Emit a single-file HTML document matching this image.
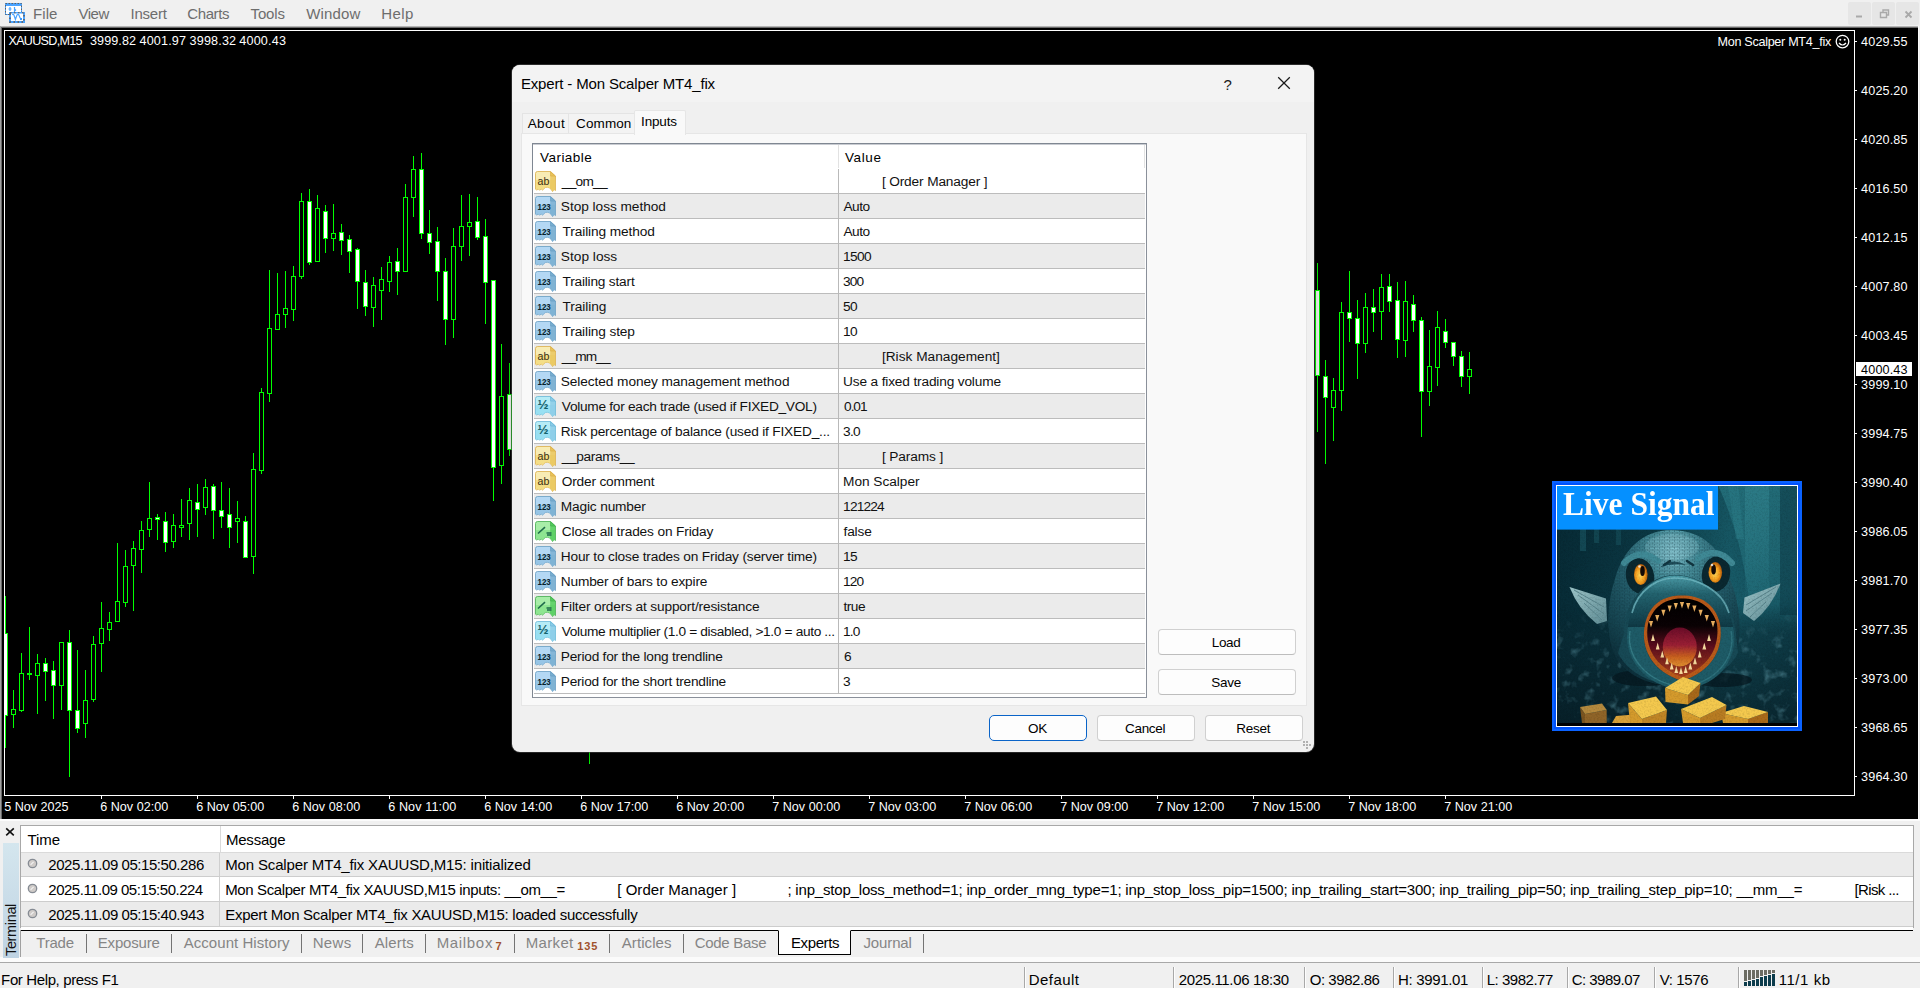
<!DOCTYPE html>
<html lang="en"><head><meta charset="utf-8"><title>MetaTrader 4 - Expert Inputs</title>
<style>
html,body{margin:0;padding:0}
body{width:1920px;height:988px;overflow:hidden;background:#f0f0f0;position:relative;font-family:'Liberation Sans',sans-serif}
.abs,.t,.ic,div{position:absolute}
.t{white-space:pre;margin:0;padding:0}
svg{display:block}
.btn{background:#fdfdfd;border:1px solid #d0d0d0;border-bottom-color:#bdbdbd;border-radius:4px;box-sizing:border-box}
</style></head><body>
<div style="left:0;top:0;width:1920px;height:26px;background:#f0f0f0"></div>
<svg class=abs style="left:0px;top:0px" width="28" height="26" viewBox="0 0 28 26">
<rect x="5" y="3" width="17" height="12" fill="#fff"/>
<rect x="5" y="3" width="17" height="3" fill="#4aa3ff"/>
<rect x="5.5" y="3.5" width="16" height="11" fill="none" stroke="#4aa3ff" stroke-width="1"/>
<rect x="5.5" y="3.5" width="16" height="11" fill="none" stroke="#5e6266" stroke-width="1" stroke-dasharray="1.5 1.5"/>
<path d="M10,7 v4 M8.5,9 h3 M14.5,7 v5 M14.5,9 l1.5,1.5" stroke="#4aa3ff" stroke-width="1.2" fill="none"/>
<rect x="9" y="12" width="16" height="11" fill="#4aa3ff"/>
<rect x="10" y="13" width="14" height="9" fill="none" stroke="#5e6266" stroke-width="2" stroke-dasharray="1.5 2.5" opacity=".85"/>
<rect x="11" y="13.5" width="12" height="7.5" fill="#fff"/>
<path d="M12.2,14.6 q1.4,-.6 2,1.2 l1.2,3.6 l1.6,-4.4 q.9,-1.2 1.9,0 l1.3,3.3" stroke="#4aa3ff" stroke-width="1.2" fill="none"/>
<rect x="20" y="18" width="2" height="2" fill="#3d98f8"/>
</svg>
<div style="left:1848px;top:2px;width:23px;height:23px;background:#e6e6e6;border-radius:2px"></div>
<div style="left:1872px;top:2px;width:23px;height:23px;background:#e6e6e6;border-radius:2px"></div>
<div style="left:1896px;top:2px;width:23px;height:23px;background:#e6e6e6;border-radius:2px"></div>
<svg class=abs style="left:1848px;top:2px" width="72" height="23" viewBox="0 0 72 23">
<rect x="8" y="13.5" width="6" height="2" fill="#a9a9a9"/>
<path d="M32.5,10.5 h6 v5 h-6 z M35,10 v-2 h5.5 v5 h-2" fill="none" stroke="#a9a9a9" stroke-width="1.4"/>
<path d="M57.5,9.5 l6,6 M63.5,9.5 l-6,6" stroke="#a9a9a9" stroke-width="1.8" fill="none"/>
</svg>
<div style="left:0;top:26px;width:1920px;height:793px;background:#000"></div>
<div style="left:0;top:26px;width:1920px;height:1px;background:#b4b4b4"></div>
<div style="left:0;top:27px;width:1920px;height:1px;background:#6a6a6a"></div>
<div style="left:0;top:26px;width:1px;height:793px;background:#a0a0a0"></div>
<div style="left:1px;top:27px;width:1px;height:792px;background:#696969"></div>
<div style="left:1918px;top:26px;width:1px;height:795px;background:#fbfbfb"></div><div style="left:1919px;top:26px;width:1px;height:795px;background:#f0f0f0"></div>
<svg class=abs style="left:0;top:0" width="1920" height="820" viewBox="0 0 1920 820" shape-rendering="crispEdges">
<rect x="1855" y="41" width="2" height="1" fill="#fff"/>
<rect x="1855" y="90" width="2" height="1" fill="#fff"/>
<rect x="1855" y="139" width="2" height="1" fill="#fff"/>
<rect x="1855" y="188" width="2" height="1" fill="#fff"/>
<rect x="1855" y="237" width="2" height="1" fill="#fff"/>
<rect x="1855" y="286" width="2" height="1" fill="#fff"/>
<rect x="1855" y="335" width="2" height="1" fill="#fff"/>
<rect x="1855" y="384" width="2" height="1" fill="#fff"/>
<rect x="1855" y="433" width="2" height="1" fill="#fff"/>
<rect x="1855" y="482" width="2" height="1" fill="#fff"/>
<rect x="1855" y="531" width="2" height="1" fill="#fff"/>
<rect x="1855" y="580" width="2" height="1" fill="#fff"/>
<rect x="1855" y="629" width="2" height="1" fill="#fff"/>
<rect x="1855" y="678" width="2" height="1" fill="#fff"/>
<rect x="1855" y="727" width="2" height="1" fill="#fff"/>
<rect x="1855" y="776" width="2" height="1" fill="#fff"/>
<rect x="101" y="796" width="1" height="3" fill="#fff"/>
<rect x="197" y="796" width="1" height="3" fill="#fff"/>
<rect x="293" y="796" width="1" height="3" fill="#fff"/>
<rect x="389" y="796" width="1" height="3" fill="#fff"/>
<rect x="485" y="796" width="1" height="3" fill="#fff"/>
<rect x="581" y="796" width="1" height="3" fill="#fff"/>
<rect x="677" y="796" width="1" height="3" fill="#fff"/>
<rect x="773" y="796" width="1" height="3" fill="#fff"/>
<rect x="869" y="796" width="1" height="3" fill="#fff"/>
<rect x="965" y="796" width="1" height="3" fill="#fff"/>
<rect x="1061" y="796" width="1" height="3" fill="#fff"/>
<rect x="1157" y="796" width="1" height="3" fill="#fff"/>
<rect x="1253" y="796" width="1" height="3" fill="#fff"/>
<rect x="1349" y="796" width="1" height="3" fill="#fff"/>
<rect x="1445" y="796" width="1" height="3" fill="#fff"/>
<rect x="5" y="596" width="1" height="152" fill="#00ff00"/>
<rect x="3.5" y="633.5" width="4" height="82" fill="#fff" stroke="#00ff00" stroke-width="1"/>
<rect x="13" y="690" width="1" height="38" fill="#00ff00"/>
<rect x="11.5" y="709.5" width="4" height="5" fill="#000" stroke="#00ff00" stroke-width="1"/>
<rect x="21" y="653" width="1" height="59" fill="#00ff00"/>
<rect x="19.5" y="673.5" width="4" height="37" fill="#000" stroke="#00ff00" stroke-width="1"/>
<rect x="29" y="627" width="1" height="53" fill="#00ff00"/>
<rect x="27" y="673" width="5" height="2" fill="#00ff00"/>
<rect x="37" y="654" width="1" height="60" fill="#00ff00"/>
<rect x="35.5" y="663.5" width="4" height="12" fill="#000" stroke="#00ff00" stroke-width="1"/>
<rect x="45" y="658" width="1" height="43" fill="#00ff00"/>
<rect x="43.5" y="663.5" width="4" height="8" fill="#fff" stroke="#00ff00" stroke-width="1"/>
<rect x="53" y="661" width="1" height="58" fill="#00ff00"/>
<rect x="51.5" y="670.5" width="4" height="15" fill="#fff" stroke="#00ff00" stroke-width="1"/>
<rect x="61" y="642" width="1" height="68" fill="#00ff00"/>
<rect x="59.5" y="642.5" width="4" height="43" fill="#000" stroke="#00ff00" stroke-width="1"/>
<rect x="69" y="630" width="1" height="147" fill="#00ff00"/>
<rect x="67.5" y="642.5" width="4" height="68" fill="#fff" stroke="#00ff00" stroke-width="1"/>
<rect x="77" y="650" width="1" height="83" fill="#00ff00"/>
<rect x="75.5" y="710.5" width="4" height="18" fill="#fff" stroke="#00ff00" stroke-width="1"/>
<rect x="85" y="670" width="1" height="68" fill="#00ff00"/>
<rect x="83.5" y="700.5" width="4" height="23" fill="#000" stroke="#00ff00" stroke-width="1"/>
<rect x="93" y="636" width="1" height="66" fill="#00ff00"/>
<rect x="91.5" y="644.5" width="4" height="55" fill="#000" stroke="#00ff00" stroke-width="1"/>
<rect x="101" y="602" width="1" height="70" fill="#00ff00"/>
<rect x="99.5" y="628.5" width="4" height="15" fill="#000" stroke="#00ff00" stroke-width="1"/>
<rect x="109" y="612" width="1" height="29" fill="#00ff00"/>
<rect x="107.5" y="622.5" width="4" height="7" fill="#000" stroke="#00ff00" stroke-width="1"/>
<rect x="117" y="543" width="1" height="78" fill="#00ff00"/>
<rect x="115.5" y="601.5" width="4" height="20" fill="#000" stroke="#00ff00" stroke-width="1"/>
<rect x="125" y="550" width="1" height="57" fill="#00ff00"/>
<rect x="123.5" y="566.5" width="4" height="36" fill="#000" stroke="#00ff00" stroke-width="1"/>
<rect x="133" y="541" width="1" height="70" fill="#00ff00"/>
<rect x="131.5" y="548.5" width="4" height="17" fill="#000" stroke="#00ff00" stroke-width="1"/>
<rect x="141" y="521" width="1" height="52" fill="#00ff00"/>
<rect x="139.5" y="530.5" width="4" height="19" fill="#000" stroke="#00ff00" stroke-width="1"/>
<rect x="149" y="482" width="1" height="55" fill="#00ff00"/>
<rect x="147.5" y="518.5" width="4" height="11" fill="#000" stroke="#00ff00" stroke-width="1"/>
<rect x="157" y="514" width="1" height="26" fill="#00ff00"/>
<rect x="155.5" y="517.5" width="4" height="2" fill="#fff" stroke="#00ff00" stroke-width="1"/>
<rect x="165" y="512" width="1" height="40" fill="#00ff00"/>
<rect x="163.5" y="521.5" width="4" height="21" fill="#fff" stroke="#00ff00" stroke-width="1"/>
<rect x="173" y="514" width="1" height="34" fill="#00ff00"/>
<rect x="171.5" y="525.5" width="4" height="16" fill="#000" stroke="#00ff00" stroke-width="1"/>
<rect x="181" y="499" width="1" height="38" fill="#00ff00"/>
<rect x="179.5" y="525.5" width="4" height="2" fill="#000" stroke="#00ff00" stroke-width="1"/>
<rect x="189" y="488" width="1" height="52" fill="#00ff00"/>
<rect x="187.5" y="500.5" width="4" height="23" fill="#000" stroke="#00ff00" stroke-width="1"/>
<rect x="197" y="484" width="1" height="53" fill="#00ff00"/>
<rect x="195.5" y="502.5" width="4" height="7" fill="#fff" stroke="#00ff00" stroke-width="1"/>
<rect x="205" y="479" width="1" height="36" fill="#00ff00"/>
<rect x="203.5" y="487.5" width="4" height="20" fill="#000" stroke="#00ff00" stroke-width="1"/>
<rect x="213" y="484" width="1" height="55" fill="#00ff00"/>
<rect x="211.5" y="486.5" width="4" height="24" fill="#fff" stroke="#00ff00" stroke-width="1"/>
<rect x="221" y="482" width="1" height="46" fill="#00ff00"/>
<rect x="219.5" y="510.5" width="4" height="6" fill="#fff" stroke="#00ff00" stroke-width="1"/>
<rect x="229" y="488" width="1" height="60" fill="#00ff00"/>
<rect x="227.5" y="514.5" width="4" height="13" fill="#fff" stroke="#00ff00" stroke-width="1"/>
<rect x="237" y="501" width="1" height="42" fill="#00ff00"/>
<rect x="235.5" y="518.5" width="4" height="3" fill="#000" stroke="#00ff00" stroke-width="1"/>
<rect x="245" y="516" width="1" height="41" fill="#00ff00"/>
<rect x="243.5" y="521.5" width="4" height="36" fill="#fff" stroke="#00ff00" stroke-width="1"/>
<rect x="253" y="453" width="1" height="121" fill="#00ff00"/>
<rect x="251.5" y="469.5" width="4" height="87" fill="#000" stroke="#00ff00" stroke-width="1"/>
<rect x="261" y="388" width="1" height="86" fill="#00ff00"/>
<rect x="259.5" y="392.5" width="4" height="78" fill="#000" stroke="#00ff00" stroke-width="1"/>
<rect x="269" y="270" width="1" height="132" fill="#00ff00"/>
<rect x="267.5" y="328.5" width="4" height="65" fill="#000" stroke="#00ff00" stroke-width="1"/>
<rect x="277" y="273" width="1" height="57" fill="#00ff00"/>
<rect x="275.5" y="314.5" width="4" height="15" fill="#000" stroke="#00ff00" stroke-width="1"/>
<rect x="285" y="271" width="1" height="57" fill="#00ff00"/>
<rect x="283.5" y="308.5" width="4" height="6" fill="#000" stroke="#00ff00" stroke-width="1"/>
<rect x="293" y="266" width="1" height="55" fill="#00ff00"/>
<rect x="291.5" y="276.5" width="4" height="33" fill="#000" stroke="#00ff00" stroke-width="1"/>
<rect x="301" y="193" width="1" height="86" fill="#00ff00"/>
<rect x="299.5" y="201.5" width="4" height="75" fill="#000" stroke="#00ff00" stroke-width="1"/>
<rect x="309" y="189" width="1" height="76" fill="#00ff00"/>
<rect x="307.5" y="201.5" width="4" height="61" fill="#fff" stroke="#00ff00" stroke-width="1"/>
<rect x="317" y="195" width="1" height="66" fill="#00ff00"/>
<rect x="315.5" y="208.5" width="4" height="53" fill="#000" stroke="#00ff00" stroke-width="1"/>
<rect x="325" y="205" width="1" height="48" fill="#00ff00"/>
<rect x="323.5" y="211.5" width="4" height="27" fill="#fff" stroke="#00ff00" stroke-width="1"/>
<rect x="333" y="204" width="1" height="47" fill="#00ff00"/>
<rect x="331.5" y="233.5" width="4" height="5" fill="#000" stroke="#00ff00" stroke-width="1"/>
<rect x="341" y="224" width="1" height="31" fill="#00ff00"/>
<rect x="339.5" y="232.5" width="4" height="8" fill="#fff" stroke="#00ff00" stroke-width="1"/>
<rect x="349" y="235" width="1" height="38" fill="#00ff00"/>
<rect x="347.5" y="239.5" width="4" height="12" fill="#fff" stroke="#00ff00" stroke-width="1"/>
<rect x="357" y="248" width="1" height="61" fill="#00ff00"/>
<rect x="355.5" y="249.5" width="4" height="32" fill="#fff" stroke="#00ff00" stroke-width="1"/>
<rect x="365" y="270" width="1" height="46" fill="#00ff00"/>
<rect x="363.5" y="282.5" width="4" height="24" fill="#fff" stroke="#00ff00" stroke-width="1"/>
<rect x="373" y="277" width="1" height="50" fill="#00ff00"/>
<rect x="371.5" y="285.5" width="4" height="22" fill="#000" stroke="#00ff00" stroke-width="1"/>
<rect x="381" y="267" width="1" height="53" fill="#00ff00"/>
<rect x="379.5" y="279.5" width="4" height="11" fill="#000" stroke="#00ff00" stroke-width="1"/>
<rect x="389" y="256" width="1" height="36" fill="#00ff00"/>
<rect x="387.5" y="262.5" width="4" height="19" fill="#000" stroke="#00ff00" stroke-width="1"/>
<rect x="397" y="248" width="1" height="47" fill="#00ff00"/>
<rect x="395.5" y="261.5" width="4" height="10" fill="#fff" stroke="#00ff00" stroke-width="1"/>
<rect x="405" y="184" width="1" height="87" fill="#00ff00"/>
<rect x="403.5" y="197.5" width="4" height="74" fill="#000" stroke="#00ff00" stroke-width="1"/>
<rect x="413" y="156" width="1" height="61" fill="#00ff00"/>
<rect x="411.5" y="169.5" width="4" height="28" fill="#000" stroke="#00ff00" stroke-width="1"/>
<rect x="421" y="153" width="1" height="86" fill="#00ff00"/>
<rect x="419.5" y="169.5" width="4" height="64" fill="#fff" stroke="#00ff00" stroke-width="1"/>
<rect x="429" y="210" width="1" height="44" fill="#00ff00"/>
<rect x="427.5" y="233.5" width="4" height="9" fill="#fff" stroke="#00ff00" stroke-width="1"/>
<rect x="437" y="227" width="1" height="74" fill="#00ff00"/>
<rect x="435.5" y="241.5" width="4" height="30" fill="#fff" stroke="#00ff00" stroke-width="1"/>
<rect x="445" y="258" width="1" height="87" fill="#00ff00"/>
<rect x="443.5" y="271.5" width="4" height="48" fill="#fff" stroke="#00ff00" stroke-width="1"/>
<rect x="453" y="228" width="1" height="110" fill="#00ff00"/>
<rect x="451.5" y="246.5" width="4" height="73" fill="#000" stroke="#00ff00" stroke-width="1"/>
<rect x="461" y="195" width="1" height="66" fill="#00ff00"/>
<rect x="459.5" y="226.5" width="4" height="20" fill="#000" stroke="#00ff00" stroke-width="1"/>
<rect x="469" y="194" width="1" height="62" fill="#00ff00"/>
<rect x="467.5" y="222.5" width="4" height="4" fill="#000" stroke="#00ff00" stroke-width="1"/>
<rect x="477" y="197" width="1" height="43" fill="#00ff00"/>
<rect x="475.5" y="221.5" width="4" height="16" fill="#fff" stroke="#00ff00" stroke-width="1"/>
<rect x="485" y="219" width="1" height="105" fill="#00ff00"/>
<rect x="483.5" y="236.5" width="4" height="46" fill="#fff" stroke="#00ff00" stroke-width="1"/>
<rect x="493" y="280" width="1" height="221" fill="#00ff00"/>
<rect x="491.5" y="280.5" width="4" height="187" fill="#fff" stroke="#00ff00" stroke-width="1"/>
<rect x="501" y="344" width="1" height="140" fill="#00ff00"/>
<rect x="499.5" y="396.5" width="4" height="69" fill="#000" stroke="#00ff00" stroke-width="1"/>
<rect x="509" y="363" width="1" height="93" fill="#00ff00"/>
<rect x="507.5" y="394.5" width="4" height="55" fill="#fff" stroke="#00ff00" stroke-width="1"/>
<rect x="589" y="700" width="1" height="64" fill="#00ff00"/>
<rect x="587.5" y="700.5" width="4" height="40" fill="#fff" stroke="#00ff00" stroke-width="1"/>
<rect x="1317" y="263" width="1" height="169" fill="#00ff00"/>
<rect x="1315.5" y="290.5" width="4" height="85" fill="#fff" stroke="#00ff00" stroke-width="1"/>
<rect x="1325" y="360" width="1" height="104" fill="#00ff00"/>
<rect x="1323.5" y="376.5" width="4" height="21" fill="#fff" stroke="#00ff00" stroke-width="1"/>
<rect x="1333" y="378" width="1" height="63" fill="#00ff00"/>
<rect x="1331.5" y="390.5" width="4" height="17" fill="#000" stroke="#00ff00" stroke-width="1"/>
<rect x="1341" y="302" width="1" height="109" fill="#00ff00"/>
<rect x="1339.5" y="312.5" width="4" height="78" fill="#000" stroke="#00ff00" stroke-width="1"/>
<rect x="1349" y="271" width="1" height="71" fill="#00ff00"/>
<rect x="1347.5" y="312.5" width="4" height="6" fill="#fff" stroke="#00ff00" stroke-width="1"/>
<rect x="1357" y="300" width="1" height="79" fill="#00ff00"/>
<rect x="1355.5" y="318.5" width="4" height="25" fill="#fff" stroke="#00ff00" stroke-width="1"/>
<rect x="1365" y="293" width="1" height="60" fill="#00ff00"/>
<rect x="1363.5" y="307.5" width="4" height="36" fill="#000" stroke="#00ff00" stroke-width="1"/>
<rect x="1373" y="289" width="1" height="43" fill="#00ff00"/>
<rect x="1371.5" y="307.5" width="4" height="5" fill="#fff" stroke="#00ff00" stroke-width="1"/>
<rect x="1381" y="274" width="1" height="66" fill="#00ff00"/>
<rect x="1379.5" y="287.5" width="4" height="24" fill="#000" stroke="#00ff00" stroke-width="1"/>
<rect x="1389" y="274" width="1" height="38" fill="#00ff00"/>
<rect x="1387.5" y="286.5" width="4" height="15" fill="#fff" stroke="#00ff00" stroke-width="1"/>
<rect x="1397" y="282" width="1" height="76" fill="#00ff00"/>
<rect x="1395.5" y="300.5" width="4" height="39" fill="#fff" stroke="#00ff00" stroke-width="1"/>
<rect x="1405" y="281" width="1" height="76" fill="#00ff00"/>
<rect x="1403.5" y="301.5" width="4" height="39" fill="#000" stroke="#00ff00" stroke-width="1"/>
<rect x="1413" y="295" width="1" height="37" fill="#00ff00"/>
<rect x="1411.5" y="304.5" width="4" height="16" fill="#fff" stroke="#00ff00" stroke-width="1"/>
<rect x="1421" y="317" width="1" height="120" fill="#00ff00"/>
<rect x="1419.5" y="320.5" width="4" height="71" fill="#fff" stroke="#00ff00" stroke-width="1"/>
<rect x="1429" y="330" width="1" height="76" fill="#00ff00"/>
<rect x="1427.5" y="366.5" width="4" height="25" fill="#000" stroke="#00ff00" stroke-width="1"/>
<rect x="1437" y="311" width="1" height="75" fill="#00ff00"/>
<rect x="1435.5" y="327.5" width="4" height="40" fill="#000" stroke="#00ff00" stroke-width="1"/>
<rect x="1445" y="319" width="1" height="29" fill="#00ff00"/>
<rect x="1443.5" y="331.5" width="4" height="11" fill="#fff" stroke="#00ff00" stroke-width="1"/>
<rect x="1453" y="342" width="1" height="24" fill="#00ff00"/>
<rect x="1451.5" y="342.5" width="4" height="14" fill="#fff" stroke="#00ff00" stroke-width="1"/>
<rect x="1461" y="351" width="1" height="36" fill="#00ff00"/>
<rect x="1459.5" y="356.5" width="4" height="20" fill="#fff" stroke="#00ff00" stroke-width="1"/>
<rect x="1469" y="352" width="1" height="42" fill="#00ff00"/>
<rect x="1467.5" y="369.5" width="4" height="7" fill="#000" stroke="#00ff00" stroke-width="1"/>
<rect x="2" y="31" width="2" height="764" fill="#000"/>
<rect x="4" y="30" width="1851" height="1" fill="#fff"/><rect x="4" y="30" width="1" height="766" fill="#fff"/><rect x="1854" y="30" width="1" height="766" fill="#fff"/><rect x="4" y="795" width="1851" height="1" fill="#fff"/>
<rect x="1856" y="362" width="56" height="14" fill="#fff"/>
</svg>
<svg class=abs style="left:1834px;top:33px" width="18" height="18" viewBox="0 0 18 18"><circle cx="8.5" cy="8.6" r="6.3" fill="none" stroke="#fff" stroke-width="1.3"/><circle cx="6.3" cy="6.8" r="1" fill="#fff"/><circle cx="10.7" cy="6.8" r="1" fill="#fff"/><path d="M5,10 q3.5,4 7,0" fill="none" stroke="#fff" stroke-width="1.2"/></svg>
<svg class=abs style="left:1552px;top:481px" width="250" height="250" viewBox="0 0 250 250">
<defs>
<linearGradient id="fbg" x1="0" y1="0" x2="1" y2="0"><stop offset="0" stop-color="#072b36"/><stop offset=".4" stop-color="#0c3a46"/><stop offset=".72" stop-color="#185c69"/><stop offset="1" stop-color="#114a57"/></linearGradient>
<linearGradient id="fdk" x1="0" y1="0" x2="0" y2="1"><stop offset="0" stop-color="#06222b" stop-opacity=".15"/><stop offset=".5" stop-color="#06222b" stop-opacity=".0"/><stop offset=".62" stop-color="#0a2a34" stop-opacity=".55"/><stop offset="1" stop-color="#071c24" stop-opacity=".8"/></linearGradient>
<radialGradient id="fhead" cx="50%" cy="14%" r="80%"><stop offset="0" stop-color="#86c8d4"/><stop offset=".22" stop-color="#4a929e"/><stop offset=".5" stop-color="#266270"/><stop offset=".8" stop-color="#154450"/><stop offset="1" stop-color="#0c2f3a"/></radialGradient>
<linearGradient id="flip" x1="0" y1="0" x2="0" y2="1"><stop offset="0" stop-color="#4c9ca8"/><stop offset=".35" stop-color="#23636f"/><stop offset="1" stop-color="#0f3945"/></linearGradient>
<linearGradient id="fmouth" x1="0" y1="0" x2="0" y2="1"><stop offset="0" stop-color="#000"/><stop offset=".35" stop-color="#0a0204"/><stop offset=".6" stop-color="#5a0c1c"/><stop offset="1" stop-color="#a8401c"/></linearGradient>
<linearGradient id="ftng" x1="0" y1="0" x2="0" y2="1"><stop offset="0" stop-color="#6a0c28"/><stop offset=".45" stop-color="#9a1f34"/><stop offset=".75" stop-color="#c8601e"/><stop offset="1" stop-color="#e09030"/></linearGradient>
<radialGradient id="feye" cx="45%" cy="55%" r="60%"><stop offset="0" stop-color="#ffd85a"/><stop offset=".6" stop-color="#f39a1a"/><stop offset="1" stop-color="#9a4508"/></radialGradient>
<linearGradient id="ffin" x1="0" y1="0" x2="1" y2="1"><stop offset="0" stop-color="#9cc4c8"/><stop offset="1" stop-color="#5f8c94"/></linearGradient>
<filter id="fnoise" x="0" y="0" width="100%" height="100%"><feTurbulence type="fractalNoise" baseFrequency=".09" numOctaves="3" seed="7"/><feColorMatrix values="0 0 0 0 .09  0 0 0 0 .26  0 0 0 0 .32  0 0 0 -2.4 1.1"/></filter>
<filter id="fgrain" x="0" y="0" width="100%" height="100%"><feTurbulence type="fractalNoise" baseFrequency=".55" numOctaves="2" seed="3"/><feColorMatrix values="0 0 0 0 0  0 0 0 0 0  0 0 0 0 0  0 0 0 -1.3 .75"/></filter>
<linearGradient id="ftr" x1="0" y1="0" x2="0" y2="1"><stop offset="0" stop-color="#2a7f8b" stop-opacity=".85"/><stop offset=".7" stop-color="#226f7b" stop-opacity=".6"/><stop offset="1" stop-color="#1a5a66" stop-opacity="0"/></linearGradient>
<linearGradient id="ftr2" x1="0" y1="0" x2="0" y2="1"><stop offset="0" stop-color="#3d9aa5" stop-opacity=".5"/><stop offset="1" stop-color="#3d9aa5" stop-opacity="0"/></linearGradient>
<linearGradient id="fmg" x1="0" y1="0" x2="0" y2="1"><stop offset="0" stop-color="#fff" stop-opacity="0"/><stop offset=".3" stop-color="#fff" stop-opacity="1"/></linearGradient>
<mask id="fmask" maskUnits="userSpaceOnUse" x="0" y="120" width="250" height="130"><rect x="0" y="128" width="250" height="120" fill="url(#fmg)"/></mask>
<pattern id="fsc" width="5" height="3.4" patternUnits="userSpaceOnUse"><path d="M0,0 H5 M0,0 V1.7 M2.5,1.7 V3.4 M0,1.7 H5" stroke="#0e3440" stroke-width=".55" fill="none" opacity=".55"/></pattern>
<clipPath id="fclip"><rect x="5" y="5" width="240" height="237"/></clipPath>
</defs>
<rect x="0" y="0" width="250" height="250" fill="#0a62ff"/><rect x="2" y="2" width="246" height="246" fill="#0052fb"/>
<rect x="4" y="4" width="242" height="242" fill="#fff"/>
<rect x="5" y="5" width="240" height="240" fill="#000"/>
<g clip-path="url(#fclip)">
<rect x="4.5" y="4.5" width="241" height="238" fill="url(#fbg)"/>
<path d="M166,4 h80 v150 h-46 Q196,70 166,4Z" fill="url(#ftr)"/>
<rect x="193" y="4" width="24" height="125" fill="url(#ftr2)"/>
<path d="M176,4 h10 l6,54 h-8Z" fill="#37939e" opacity=".35"/>
<rect x="228" y="4" width="18" height="130" fill="#0d3b47" opacity=".55"/>
<rect x="28" y="40" width="6" height="30" fill="#2b7f8c" opacity=".35"/><rect x="42" y="40" width="5" height="22" fill="#2b7f8c" opacity=".3"/><rect x="64" y="46" width="5" height="18" fill="#2b7f8c" opacity=".25"/>
<rect x="4.5" y="4.5" width="241" height="238" fill="url(#fdk)"/>
<g mask="url(#fmask)"><rect x="4.5" y="124" width="241" height="118" filter="url(#fnoise)" opacity=".7"/></g>
<ellipse cx="92" cy="197" rx="32" ry="8" fill="#051820" opacity=".75"/><ellipse cx="170" cy="199" rx="30" ry="7" fill="#051820" opacity=".75"/>
<path d="M17.5,106 L54,117.5 L55,140 L45,143 Q26,128 17.5,106Z" fill="url(#ffin)"/>
<path d="M228.5,102.5 L192.5,116.5 L191,132 L202,140 Q220,126 228.5,102.5Z" fill="url(#ffin)"/>
<path d="M22,109 L52,126 M26,114 L52,133 M32,122 L50,139" stroke="#5a868e" stroke-width="1" fill="none"/>
<path d="M224,106 L194,124 M220,112 L194,130 M214,121 L198,136" stroke="#5a868e" stroke-width="1" fill="none"/>
<path d="M119,49 C150,49 170,68 178,98 C188,122 190,150 185,170 C178,194 152,205 125,205 C98,205 70,194 61,170 C54,150 55,122 63,98 C71,68 92,49 119,49Z" fill="url(#fhead)"/>
<ellipse cx="120" cy="66" rx="27" ry="13" fill="#9ad6e0" opacity=".3"/>
<path d="M119,49 C150,49 170,68 178,98 C188,122 190,150 185,170 C178,194 152,205 125,205 C98,205 70,194 61,170 C54,150 55,122 63,98 C71,68 92,49 119,49Z" fill="url(#fsc)"/>
<ellipse cx="88" cy="95" rx="14" ry="18" transform="rotate(-12 88 95)" fill="#0a2830"/>
<ellipse cx="164" cy="93" rx="14" ry="18" transform="rotate(12 164 93)" fill="#0a2830"/>
<path d="M72,82 Q88,66 106,80" stroke="#3f8995" stroke-width="6" fill="none" stroke-linecap="round"/>
<path d="M146,78 Q164,64 180,82" stroke="#3f8995" stroke-width="6" fill="none" stroke-linecap="round"/>
<ellipse cx="88.8" cy="93.5" rx="6.8" ry="10.6" fill="url(#feye)"/><ellipse cx="163.3" cy="91.3" rx="6.8" ry="10.4" fill="url(#feye)"/>
<ellipse cx="90.5" cy="90" rx="2.3" ry="5" fill="#140a06"/><ellipse cx="161.6" cy="88.5" rx="2.3" ry="5" fill="#140a06"/>
<circle cx="87.5" cy="85.5" r="1.3" fill="#fff" opacity=".8"/><circle cx="160" cy="84" r="1.3" fill="#fff" opacity=".8"/>
<path d="M112,84 l6,-4 M135,80 l6,4" stroke="#123640" stroke-width="2.5" stroke-linecap="round"/>
<path d="M72,152 C72,118 98,94 123,94 C150,94 182,118 184,152 L186,172 C176,192 150,204 126,204 C100,204 76,192 66,172Z" fill="#174955"/>
<path d="M76,146 C78,112 104,94.5 123,94.5 C146,94.5 176,112 181,146 L168,146 C164,124 148,114.5 130,114.5 C110,114.5 98,124 93,146Z" fill="url(#flip)"/>
<path d="M80,132 C86,108 106,97 123,97 C144,97 170,108 177,132" stroke="#79c0ca" stroke-width="1.6" fill="none" opacity=".7"/>
<path d="M76,146 C70,176 92,205 130,209 C168,205 188,176 181,146 L168,146 C172,168 160,191 130,200 C100,191 88,168 93,146Z" fill="#1e5b67"/>
<path d="M78,150 C74,176 94,201 130,206" stroke="#3d8792" stroke-width="1.4" fill="none" opacity=".7"/>
<path d="M179,150 C184,176 166,201 130,206" stroke="#3d8792" stroke-width="1.4" fill="none" opacity=".5"/>
<path d="M108,86 Q121,76 134,84 Q121,82 108,86Z" fill="#0f3a46" opacity=".8"/>
<path d="M93,143 C98,122 112,114.5 130,114.5 C148,114.5 163,122 168,143 C172,168 160,190 130,200 C100,190 88,168 93,143Z" fill="#b85a1a"/>
<path d="M96,143 C101,125 114,117.5 130,117.5 C146,117.5 160,125 165,143 C168,166 157,186 130,196 C103,186 92,166 96,143Z" fill="url(#fmouth)"/>
<ellipse cx="127.8" cy="166" rx="17" ry="19.5" fill="url(#ftng)"/>
<path d="M96.9,140.0 L101.1,140.0 L99.0,146.5Z" fill="#e9b060"/><path d="M103.10000000000001,134.1 L107.3,134.1 L105.2,140.6Z" fill="#e9b060"/><path d="M109.30000000000001,128.8 L113.5,128.8 L111.4,135.3Z" fill="#e9b060"/><path d="M115.5,124.6 L119.69999999999999,124.6 L117.6,131.1Z" fill="#e9b060"/><path d="M121.7,121.9 L125.89999999999999,121.9 L123.8,128.4Z" fill="#e9b060"/><path d="M127.9,121.0 L132.1,121.0 L130.0,127.5Z" fill="#e9b060"/><path d="M134.1,121.9 L138.29999999999998,121.9 L136.2,128.4Z" fill="#e9b060"/><path d="M140.3,124.6 L144.5,124.6 L142.4,131.1Z" fill="#e9b060"/><path d="M146.5,128.8 L150.7,128.8 L148.6,135.3Z" fill="#e9b060"/><path d="M152.70000000000002,134.1 L156.9,134.1 L154.8,140.6Z" fill="#e9b060"/><path d="M158.9,140.0 L163.1,140.0 L161.0,146.5Z" fill="#e9b060"/><path d="M99.1,160.0 L102.9,160.0 L101.0,153.0Z" fill="#f7dca0"/><path d="M103.8,168.5 L107.60000000000001,168.5 L105.7,161.5Z" fill="#f7dca0"/><path d="M108.39999999999999,176.5 L112.2,176.5 L110.3,169.5Z" fill="#f7dca0"/><path d="M113.1,183.3 L116.9,183.3 L115.0,176.3Z" fill="#f7dca0"/><path d="M117.8,188.6 L121.60000000000001,188.6 L119.7,181.6Z" fill="#f7dca0"/><path d="M122.39999999999999,191.9 L126.2,191.9 L124.3,184.9Z" fill="#f7dca0"/><path d="M127.1,193.0 L130.9,193.0 L129.0,186.0Z" fill="#f7dca0"/><path d="M131.79999999999998,191.9 L135.6,191.9 L133.7,184.9Z" fill="#f7dca0"/><path d="M136.4,188.6 L140.20000000000002,188.6 L138.3,181.6Z" fill="#f7dca0"/><path d="M141.1,183.3 L144.9,183.3 L143.0,176.3Z" fill="#f7dca0"/><path d="M145.79999999999998,176.5 L149.6,176.5 L147.7,169.5Z" fill="#f7dca0"/><path d="M150.4,168.5 L154.20000000000002,168.5 L152.3,161.5Z" fill="#f7dca0"/><path d="M155.1,160.0 L158.9,160.0 L157.0,153.0Z" fill="#f7dca0"/><path d="M28,226 L33,233 L33,242 L30,242Z" fill="#7a5420"/><path d="M33,233 L54.7,229 L54.7,242 L33,242Z" fill="#8f6428"/><path d="M28,226 L50,222.5 L54.7,229 L33,233Z" fill="#b58a3e"/><path d="M60,242 L64,235 L82,233.5 L86,242Z" fill="#d9a23a"/><path d="M169,232 L196,238 L196,242 L171,242Z" fill="#d49a2c"/><path d="M196,238 L216,231 L216,242 L196,242Z" fill="#a8691a"/><path d="M169,232 L192,225 L216,231 L196,238Z" fill="#f4c94e"/><path d="M76,222 L90,238 L90,242 L78,242Z" fill="#d49a2c"/><path d="M90,238 L115,229 L114,242 L90,242Z" fill="#bf8526"/><path d="M76,222 L104,215.5 L115,229 L90,238Z" fill="#f4c94e"/><path d="M129,228 L148,237 L148,242 L131,242Z" fill="#d49a2c"/><path d="M148,237 L174.5,224 L173,238 L160,242 L148,242Z" fill="#b87c22"/><path d="M129,228 L160,216 L174.5,224 L148,237Z" fill="#f4c94e"/><path d="M113,207 L136,214 L136,223.5 L113.5,221Z" fill="#d49a2c"/><path d="M136,214 L148.5,202 L147,215 L136,223.5Z" fill="#a8691a"/><path d="M113,207 L131,196 L148.5,202 L136,214Z" fill="#f4c94e"/><rect x="4.5" y="4.5" width="241" height="238" filter="url(#fgrain)" opacity=".18"/></g><rect x="5" y="5" width="161" height="43.6" fill="#0590ff"/></svg>
<div style="left:511px;top:64px;width:804px;height:689px;border-radius:9px;background:rgba(90,90,90,.55)"></div>
<div style="left:512px;top:65px;width:802px;height:687px;border-radius:8px;background:#f0f0f0;overflow:hidden;box-shadow:0 3px 16px rgba(0,0,0,.35)"><div style="left:0;top:0;width:802px;height:37px;background:#f3f3f3"></div></div>
<svg class=abs style="left:1270px;top:70px" width="28" height="26" viewBox="0 0 28 26"><path d="M8.2,7.2 l11.6,11.6 M19.8,7.2 l-11.6,11.6" stroke="#1a1a1a" stroke-width="1.25" fill="none"/></svg>
<div style="left:522px;top:113px;width:47px;height:21px;background:#f3f3f3;border:1px solid #e4e4e4;box-sizing:border-box;border-bottom:none"></div>
<div style="left:569px;top:113px;width:66px;height:21px;background:#f3f3f3;border:1px solid #e4e4e4;box-sizing:border-box;border-bottom:none;border-left:none"></div>
<div style="left:521px;top:133px;width:786px;height:573px;background:#f9f9f9;border:1px solid #e6e6e6;box-sizing:border-box"></div>
<div style="left:634px;top:110px;width:52px;height:25px;background:#f9f9f9;border:1px solid #e6e6e6;border-bottom:none;box-sizing:border-box;border-radius:2px 2px 0 0"></div>
<div style="left:532px;top:143px;width:615px;height:555px;background:#fff;border:1px solid #7f8792;box-sizing:border-box;border-right-color:#8a909a;border-bottom-color:#8a909a"></div>
<div style="left:533px;top:144px;width:613px;height:1px;background:#c9ccd2"></div>
<div style="left:838px;top:145px;width:1px;height:23px;background:#e2e2e2"></div><div style="left:1144px;top:145px;width:1px;height:23px;background:#e2e2e2"></div>
<div style="left:534px;top:169px;width:611px;height:24px;background:#fff"></div>
<div style="left:534px;top:193px;width:611px;height:1px;background:#bcbcbc"></div>
<svg class=ic style="left:535px;top:171px" width="21" height="21" viewBox="0 0 21 21"><path d="M0.5,2.5 Q0.5,0.5 2.5,0.5 H15.5 L20.5,5 V19.6 L19,18.4 L17.6,20.5 L16.2,18.4 L14.6,17 L12.5,16.2 L10.5,16.4 L9,17.4 L7.6,19.2 L6.1,17.8 L4.6,19.3 L3.1,17.8 L1.7,19.2 L0.5,18 Z" fill="#f8ecb4" stroke="#d9a93f" stroke-width="1" stroke-opacity=".75"/><path d="M1,9 H20 V19 L19,18.4 L17.6,20.2 L16.2,18.4 L14.6,17 L12.5,16.2 L10.5,16.4 L9,17.4 L7.6,19 L6.1,17.8 L4.6,19 L3.1,17.8 L1.7,19 L1,18 Z" fill="#f3d978" opacity=".75"/><path d="M15.2,5 H20 V19.3 L19,18.4 L17.6,20.2 L16.2,18.4 L15,17.3 Z" fill="#e9c45a" opacity=".8"/><path d="M15.5,0.8 V5 H20.2 Z" fill="#e9c45a" stroke="#d9a93f" stroke-width=".6"/><text x="2.6" y="14.1" font-family="'Liberation Sans',sans-serif" font-size="10.4" fill="#3a2e14" textLength="11.8" lengthAdjust="spacingAndGlyphs">ab</text></svg>
<div style="left:534px;top:194px;width:611px;height:24px;background:#ebebeb"></div>
<div style="left:534px;top:218px;width:611px;height:1px;background:#bcbcbc"></div>
<svg class=ic style="left:535px;top:196px" width="21" height="21" viewBox="0 0 21 21"><path d="M0.5,2.5 Q0.5,0.5 2.5,0.5 H15.5 L20.5,5 V19.6 L19,18.4 L17.6,20.5 L16.2,18.4 L14.6,17 L12.5,16.2 L10.5,16.4 L9,17.4 L7.6,19.2 L6.1,17.8 L4.6,19.3 L3.1,17.8 L1.7,19.2 L0.5,18 Z" fill="#b4d8f4" stroke="#5f98bf" stroke-width="1" stroke-opacity=".75"/><path d="M1,9 H20 V19 L19,18.4 L17.6,20.2 L16.2,18.4 L14.6,17 L12.5,16.2 L10.5,16.4 L9,17.4 L7.6,19 L6.1,17.8 L4.6,19 L3.1,17.8 L1.7,19 L1,18 Z" fill="#8ebfe2" opacity=".75"/><path d="M15.2,5 H20 V19.3 L19,18.4 L17.6,20.2 L16.2,18.4 L15,17.3 Z" fill="#79aed0" opacity=".8"/><path d="M15.5,0.8 V5 H20.2 Z" fill="#79aed0" stroke="#5f98bf" stroke-width=".6"/><text x="2.5" y="14.4" font-family="'Liberation Sans',sans-serif" font-size="9.2" font-weight="700" fill="#06202a" textLength="13.2" lengthAdjust="spacingAndGlyphs">123</text></svg>
<div style="left:534px;top:219px;width:611px;height:24px;background:#fff"></div>
<div style="left:534px;top:243px;width:611px;height:1px;background:#bcbcbc"></div>
<svg class=ic style="left:535px;top:221px" width="21" height="21" viewBox="0 0 21 21"><path d="M0.5,2.5 Q0.5,0.5 2.5,0.5 H15.5 L20.5,5 V19.6 L19,18.4 L17.6,20.5 L16.2,18.4 L14.6,17 L12.5,16.2 L10.5,16.4 L9,17.4 L7.6,19.2 L6.1,17.8 L4.6,19.3 L3.1,17.8 L1.7,19.2 L0.5,18 Z" fill="#b4d8f4" stroke="#5f98bf" stroke-width="1" stroke-opacity=".75"/><path d="M1,9 H20 V19 L19,18.4 L17.6,20.2 L16.2,18.4 L14.6,17 L12.5,16.2 L10.5,16.4 L9,17.4 L7.6,19 L6.1,17.8 L4.6,19 L3.1,17.8 L1.7,19 L1,18 Z" fill="#8ebfe2" opacity=".75"/><path d="M15.2,5 H20 V19.3 L19,18.4 L17.6,20.2 L16.2,18.4 L15,17.3 Z" fill="#79aed0" opacity=".8"/><path d="M15.5,0.8 V5 H20.2 Z" fill="#79aed0" stroke="#5f98bf" stroke-width=".6"/><text x="2.5" y="14.4" font-family="'Liberation Sans',sans-serif" font-size="9.2" font-weight="700" fill="#06202a" textLength="13.2" lengthAdjust="spacingAndGlyphs">123</text></svg>
<div style="left:534px;top:244px;width:611px;height:24px;background:#ebebeb"></div>
<div style="left:534px;top:268px;width:611px;height:1px;background:#bcbcbc"></div>
<svg class=ic style="left:535px;top:246px" width="21" height="21" viewBox="0 0 21 21"><path d="M0.5,2.5 Q0.5,0.5 2.5,0.5 H15.5 L20.5,5 V19.6 L19,18.4 L17.6,20.5 L16.2,18.4 L14.6,17 L12.5,16.2 L10.5,16.4 L9,17.4 L7.6,19.2 L6.1,17.8 L4.6,19.3 L3.1,17.8 L1.7,19.2 L0.5,18 Z" fill="#b4d8f4" stroke="#5f98bf" stroke-width="1" stroke-opacity=".75"/><path d="M1,9 H20 V19 L19,18.4 L17.6,20.2 L16.2,18.4 L14.6,17 L12.5,16.2 L10.5,16.4 L9,17.4 L7.6,19 L6.1,17.8 L4.6,19 L3.1,17.8 L1.7,19 L1,18 Z" fill="#8ebfe2" opacity=".75"/><path d="M15.2,5 H20 V19.3 L19,18.4 L17.6,20.2 L16.2,18.4 L15,17.3 Z" fill="#79aed0" opacity=".8"/><path d="M15.5,0.8 V5 H20.2 Z" fill="#79aed0" stroke="#5f98bf" stroke-width=".6"/><text x="2.5" y="14.4" font-family="'Liberation Sans',sans-serif" font-size="9.2" font-weight="700" fill="#06202a" textLength="13.2" lengthAdjust="spacingAndGlyphs">123</text></svg>
<div style="left:534px;top:269px;width:611px;height:24px;background:#fff"></div>
<div style="left:534px;top:293px;width:611px;height:1px;background:#bcbcbc"></div>
<svg class=ic style="left:535px;top:271px" width="21" height="21" viewBox="0 0 21 21"><path d="M0.5,2.5 Q0.5,0.5 2.5,0.5 H15.5 L20.5,5 V19.6 L19,18.4 L17.6,20.5 L16.2,18.4 L14.6,17 L12.5,16.2 L10.5,16.4 L9,17.4 L7.6,19.2 L6.1,17.8 L4.6,19.3 L3.1,17.8 L1.7,19.2 L0.5,18 Z" fill="#b4d8f4" stroke="#5f98bf" stroke-width="1" stroke-opacity=".75"/><path d="M1,9 H20 V19 L19,18.4 L17.6,20.2 L16.2,18.4 L14.6,17 L12.5,16.2 L10.5,16.4 L9,17.4 L7.6,19 L6.1,17.8 L4.6,19 L3.1,17.8 L1.7,19 L1,18 Z" fill="#8ebfe2" opacity=".75"/><path d="M15.2,5 H20 V19.3 L19,18.4 L17.6,20.2 L16.2,18.4 L15,17.3 Z" fill="#79aed0" opacity=".8"/><path d="M15.5,0.8 V5 H20.2 Z" fill="#79aed0" stroke="#5f98bf" stroke-width=".6"/><text x="2.5" y="14.4" font-family="'Liberation Sans',sans-serif" font-size="9.2" font-weight="700" fill="#06202a" textLength="13.2" lengthAdjust="spacingAndGlyphs">123</text></svg>
<div style="left:534px;top:294px;width:611px;height:24px;background:#ebebeb"></div>
<div style="left:534px;top:318px;width:611px;height:1px;background:#bcbcbc"></div>
<svg class=ic style="left:535px;top:296px" width="21" height="21" viewBox="0 0 21 21"><path d="M0.5,2.5 Q0.5,0.5 2.5,0.5 H15.5 L20.5,5 V19.6 L19,18.4 L17.6,20.5 L16.2,18.4 L14.6,17 L12.5,16.2 L10.5,16.4 L9,17.4 L7.6,19.2 L6.1,17.8 L4.6,19.3 L3.1,17.8 L1.7,19.2 L0.5,18 Z" fill="#b4d8f4" stroke="#5f98bf" stroke-width="1" stroke-opacity=".75"/><path d="M1,9 H20 V19 L19,18.4 L17.6,20.2 L16.2,18.4 L14.6,17 L12.5,16.2 L10.5,16.4 L9,17.4 L7.6,19 L6.1,17.8 L4.6,19 L3.1,17.8 L1.7,19 L1,18 Z" fill="#8ebfe2" opacity=".75"/><path d="M15.2,5 H20 V19.3 L19,18.4 L17.6,20.2 L16.2,18.4 L15,17.3 Z" fill="#79aed0" opacity=".8"/><path d="M15.5,0.8 V5 H20.2 Z" fill="#79aed0" stroke="#5f98bf" stroke-width=".6"/><text x="2.5" y="14.4" font-family="'Liberation Sans',sans-serif" font-size="9.2" font-weight="700" fill="#06202a" textLength="13.2" lengthAdjust="spacingAndGlyphs">123</text></svg>
<div style="left:534px;top:319px;width:611px;height:24px;background:#fff"></div>
<div style="left:534px;top:343px;width:611px;height:1px;background:#bcbcbc"></div>
<svg class=ic style="left:535px;top:321px" width="21" height="21" viewBox="0 0 21 21"><path d="M0.5,2.5 Q0.5,0.5 2.5,0.5 H15.5 L20.5,5 V19.6 L19,18.4 L17.6,20.5 L16.2,18.4 L14.6,17 L12.5,16.2 L10.5,16.4 L9,17.4 L7.6,19.2 L6.1,17.8 L4.6,19.3 L3.1,17.8 L1.7,19.2 L0.5,18 Z" fill="#b4d8f4" stroke="#5f98bf" stroke-width="1" stroke-opacity=".75"/><path d="M1,9 H20 V19 L19,18.4 L17.6,20.2 L16.2,18.4 L14.6,17 L12.5,16.2 L10.5,16.4 L9,17.4 L7.6,19 L6.1,17.8 L4.6,19 L3.1,17.8 L1.7,19 L1,18 Z" fill="#8ebfe2" opacity=".75"/><path d="M15.2,5 H20 V19.3 L19,18.4 L17.6,20.2 L16.2,18.4 L15,17.3 Z" fill="#79aed0" opacity=".8"/><path d="M15.5,0.8 V5 H20.2 Z" fill="#79aed0" stroke="#5f98bf" stroke-width=".6"/><text x="2.5" y="14.4" font-family="'Liberation Sans',sans-serif" font-size="9.2" font-weight="700" fill="#06202a" textLength="13.2" lengthAdjust="spacingAndGlyphs">123</text></svg>
<div style="left:534px;top:344px;width:611px;height:24px;background:#ebebeb"></div>
<div style="left:534px;top:368px;width:611px;height:1px;background:#bcbcbc"></div>
<svg class=ic style="left:535px;top:346px" width="21" height="21" viewBox="0 0 21 21"><path d="M0.5,2.5 Q0.5,0.5 2.5,0.5 H15.5 L20.5,5 V19.6 L19,18.4 L17.6,20.5 L16.2,18.4 L14.6,17 L12.5,16.2 L10.5,16.4 L9,17.4 L7.6,19.2 L6.1,17.8 L4.6,19.3 L3.1,17.8 L1.7,19.2 L0.5,18 Z" fill="#f8ecb4" stroke="#d9a93f" stroke-width="1" stroke-opacity=".75"/><path d="M1,9 H20 V19 L19,18.4 L17.6,20.2 L16.2,18.4 L14.6,17 L12.5,16.2 L10.5,16.4 L9,17.4 L7.6,19 L6.1,17.8 L4.6,19 L3.1,17.8 L1.7,19 L1,18 Z" fill="#f3d978" opacity=".75"/><path d="M15.2,5 H20 V19.3 L19,18.4 L17.6,20.2 L16.2,18.4 L15,17.3 Z" fill="#e9c45a" opacity=".8"/><path d="M15.5,0.8 V5 H20.2 Z" fill="#e9c45a" stroke="#d9a93f" stroke-width=".6"/><text x="2.6" y="14.1" font-family="'Liberation Sans',sans-serif" font-size="10.4" fill="#3a2e14" textLength="11.8" lengthAdjust="spacingAndGlyphs">ab</text></svg>
<div style="left:534px;top:369px;width:611px;height:24px;background:#fff"></div>
<div style="left:534px;top:393px;width:611px;height:1px;background:#bcbcbc"></div>
<svg class=ic style="left:535px;top:371px" width="21" height="21" viewBox="0 0 21 21"><path d="M0.5,2.5 Q0.5,0.5 2.5,0.5 H15.5 L20.5,5 V19.6 L19,18.4 L17.6,20.5 L16.2,18.4 L14.6,17 L12.5,16.2 L10.5,16.4 L9,17.4 L7.6,19.2 L6.1,17.8 L4.6,19.3 L3.1,17.8 L1.7,19.2 L0.5,18 Z" fill="#b4d8f4" stroke="#5f98bf" stroke-width="1" stroke-opacity=".75"/><path d="M1,9 H20 V19 L19,18.4 L17.6,20.2 L16.2,18.4 L14.6,17 L12.5,16.2 L10.5,16.4 L9,17.4 L7.6,19 L6.1,17.8 L4.6,19 L3.1,17.8 L1.7,19 L1,18 Z" fill="#8ebfe2" opacity=".75"/><path d="M15.2,5 H20 V19.3 L19,18.4 L17.6,20.2 L16.2,18.4 L15,17.3 Z" fill="#79aed0" opacity=".8"/><path d="M15.5,0.8 V5 H20.2 Z" fill="#79aed0" stroke="#5f98bf" stroke-width=".6"/><text x="2.5" y="14.4" font-family="'Liberation Sans',sans-serif" font-size="9.2" font-weight="700" fill="#06202a" textLength="13.2" lengthAdjust="spacingAndGlyphs">123</text></svg>
<div style="left:534px;top:394px;width:611px;height:24px;background:#ebebeb"></div>
<div style="left:534px;top:418px;width:611px;height:1px;background:#bcbcbc"></div>
<svg class=ic style="left:535px;top:396px" width="21" height="21" viewBox="0 0 21 21"><path d="M0.5,2.5 Q0.5,0.5 2.5,0.5 H15.5 L20.5,5 V19.6 L19,18.4 L17.6,20.5 L16.2,18.4 L14.6,17 L12.5,16.2 L10.5,16.4 L9,17.4 L7.6,19.2 L6.1,17.8 L4.6,19.3 L3.1,17.8 L1.7,19.2 L0.5,18 Z" fill="#b6ecf6" stroke="#62b4d6" stroke-width="1" stroke-opacity=".75"/><path d="M1,9 H20 V19 L19,18.4 L17.6,20.2 L16.2,18.4 L14.6,17 L12.5,16.2 L10.5,16.4 L9,17.4 L7.6,19 L6.1,17.8 L4.6,19 L3.1,17.8 L1.7,19 L1,18 Z" fill="#8fdcf0" opacity=".75"/><path d="M15.2,5 H20 V19.3 L19,18.4 L17.6,20.2 L16.2,18.4 L15,17.3 Z" fill="#8ccbe6" opacity=".8"/><path d="M15.5,0.8 V5 H20.2 Z" fill="#8ccbe6" stroke="#62b4d6" stroke-width=".6"/><text x="2.4" y="13.1" font-family="'Liberation Sans',sans-serif" font-size="12.5" font-weight="700" fill="#14626c" textLength="11" lengthAdjust="spacingAndGlyphs">½</text></svg>
<div style="left:534px;top:419px;width:611px;height:24px;background:#fff"></div>
<div style="left:534px;top:443px;width:611px;height:1px;background:#bcbcbc"></div>
<svg class=ic style="left:535px;top:421px" width="21" height="21" viewBox="0 0 21 21"><path d="M0.5,2.5 Q0.5,0.5 2.5,0.5 H15.5 L20.5,5 V19.6 L19,18.4 L17.6,20.5 L16.2,18.4 L14.6,17 L12.5,16.2 L10.5,16.4 L9,17.4 L7.6,19.2 L6.1,17.8 L4.6,19.3 L3.1,17.8 L1.7,19.2 L0.5,18 Z" fill="#b6ecf6" stroke="#62b4d6" stroke-width="1" stroke-opacity=".75"/><path d="M1,9 H20 V19 L19,18.4 L17.6,20.2 L16.2,18.4 L14.6,17 L12.5,16.2 L10.5,16.4 L9,17.4 L7.6,19 L6.1,17.8 L4.6,19 L3.1,17.8 L1.7,19 L1,18 Z" fill="#8fdcf0" opacity=".75"/><path d="M15.2,5 H20 V19.3 L19,18.4 L17.6,20.2 L16.2,18.4 L15,17.3 Z" fill="#8ccbe6" opacity=".8"/><path d="M15.5,0.8 V5 H20.2 Z" fill="#8ccbe6" stroke="#62b4d6" stroke-width=".6"/><text x="2.4" y="13.1" font-family="'Liberation Sans',sans-serif" font-size="12.5" font-weight="700" fill="#14626c" textLength="11" lengthAdjust="spacingAndGlyphs">½</text></svg>
<div style="left:534px;top:444px;width:611px;height:24px;background:#ebebeb"></div>
<div style="left:534px;top:468px;width:611px;height:1px;background:#bcbcbc"></div>
<svg class=ic style="left:535px;top:446px" width="21" height="21" viewBox="0 0 21 21"><path d="M0.5,2.5 Q0.5,0.5 2.5,0.5 H15.5 L20.5,5 V19.6 L19,18.4 L17.6,20.5 L16.2,18.4 L14.6,17 L12.5,16.2 L10.5,16.4 L9,17.4 L7.6,19.2 L6.1,17.8 L4.6,19.3 L3.1,17.8 L1.7,19.2 L0.5,18 Z" fill="#f8ecb4" stroke="#d9a93f" stroke-width="1" stroke-opacity=".75"/><path d="M1,9 H20 V19 L19,18.4 L17.6,20.2 L16.2,18.4 L14.6,17 L12.5,16.2 L10.5,16.4 L9,17.4 L7.6,19 L6.1,17.8 L4.6,19 L3.1,17.8 L1.7,19 L1,18 Z" fill="#f3d978" opacity=".75"/><path d="M15.2,5 H20 V19.3 L19,18.4 L17.6,20.2 L16.2,18.4 L15,17.3 Z" fill="#e9c45a" opacity=".8"/><path d="M15.5,0.8 V5 H20.2 Z" fill="#e9c45a" stroke="#d9a93f" stroke-width=".6"/><text x="2.6" y="14.1" font-family="'Liberation Sans',sans-serif" font-size="10.4" fill="#3a2e14" textLength="11.8" lengthAdjust="spacingAndGlyphs">ab</text></svg>
<div style="left:534px;top:469px;width:611px;height:24px;background:#fff"></div>
<div style="left:534px;top:493px;width:611px;height:1px;background:#bcbcbc"></div>
<svg class=ic style="left:535px;top:471px" width="21" height="21" viewBox="0 0 21 21"><path d="M0.5,2.5 Q0.5,0.5 2.5,0.5 H15.5 L20.5,5 V19.6 L19,18.4 L17.6,20.5 L16.2,18.4 L14.6,17 L12.5,16.2 L10.5,16.4 L9,17.4 L7.6,19.2 L6.1,17.8 L4.6,19.3 L3.1,17.8 L1.7,19.2 L0.5,18 Z" fill="#f8ecb4" stroke="#d9a93f" stroke-width="1" stroke-opacity=".75"/><path d="M1,9 H20 V19 L19,18.4 L17.6,20.2 L16.2,18.4 L14.6,17 L12.5,16.2 L10.5,16.4 L9,17.4 L7.6,19 L6.1,17.8 L4.6,19 L3.1,17.8 L1.7,19 L1,18 Z" fill="#f3d978" opacity=".75"/><path d="M15.2,5 H20 V19.3 L19,18.4 L17.6,20.2 L16.2,18.4 L15,17.3 Z" fill="#e9c45a" opacity=".8"/><path d="M15.5,0.8 V5 H20.2 Z" fill="#e9c45a" stroke="#d9a93f" stroke-width=".6"/><text x="2.6" y="14.1" font-family="'Liberation Sans',sans-serif" font-size="10.4" fill="#3a2e14" textLength="11.8" lengthAdjust="spacingAndGlyphs">ab</text></svg>
<div style="left:534px;top:494px;width:611px;height:24px;background:#ebebeb"></div>
<div style="left:534px;top:518px;width:611px;height:1px;background:#bcbcbc"></div>
<svg class=ic style="left:535px;top:496px" width="21" height="21" viewBox="0 0 21 21"><path d="M0.5,2.5 Q0.5,0.5 2.5,0.5 H15.5 L20.5,5 V19.6 L19,18.4 L17.6,20.5 L16.2,18.4 L14.6,17 L12.5,16.2 L10.5,16.4 L9,17.4 L7.6,19.2 L6.1,17.8 L4.6,19.3 L3.1,17.8 L1.7,19.2 L0.5,18 Z" fill="#b4d8f4" stroke="#5f98bf" stroke-width="1" stroke-opacity=".75"/><path d="M1,9 H20 V19 L19,18.4 L17.6,20.2 L16.2,18.4 L14.6,17 L12.5,16.2 L10.5,16.4 L9,17.4 L7.6,19 L6.1,17.8 L4.6,19 L3.1,17.8 L1.7,19 L1,18 Z" fill="#8ebfe2" opacity=".75"/><path d="M15.2,5 H20 V19.3 L19,18.4 L17.6,20.2 L16.2,18.4 L15,17.3 Z" fill="#79aed0" opacity=".8"/><path d="M15.5,0.8 V5 H20.2 Z" fill="#79aed0" stroke="#5f98bf" stroke-width=".6"/><text x="2.5" y="14.4" font-family="'Liberation Sans',sans-serif" font-size="9.2" font-weight="700" fill="#06202a" textLength="13.2" lengthAdjust="spacingAndGlyphs">123</text></svg>
<div style="left:534px;top:519px;width:611px;height:24px;background:#fff"></div>
<div style="left:534px;top:543px;width:611px;height:1px;background:#bcbcbc"></div>
<svg class=ic style="left:535px;top:521px" width="21" height="21" viewBox="0 0 21 21"><path d="M0.5,2.5 Q0.5,0.5 2.5,0.5 H15.5 L20.5,5 V19.6 L19,18.4 L17.6,20.5 L16.2,18.4 L14.6,17 L12.5,16.2 L10.5,16.4 L9,17.4 L7.6,19.2 L6.1,17.8 L4.6,19.3 L3.1,17.8 L1.7,19.2 L0.5,18 Z" fill="#a8eda8" stroke="#3aa845" stroke-width="1" stroke-opacity=".75"/><path d="M1,9 H20 V19 L19,18.4 L17.6,20.2 L16.2,18.4 L14.6,17 L12.5,16.2 L10.5,16.4 L9,17.4 L7.6,19 L6.1,17.8 L4.6,19 L3.1,17.8 L1.7,19 L1,18 Z" fill="#86e28a" opacity=".75"/><path d="M15.2,5 H20 V19.3 L19,18.4 L17.6,20.2 L16.2,18.4 L15,17.3 Z" fill="#52cc5c" opacity=".8"/><path d="M15.5,0.8 V5 H20.2 Z" fill="#52cc5c" stroke="#3aa845" stroke-width=".6"/><path d="M3,12.5 L10,6.2" stroke="#1e6a4a" stroke-width="1.6" fill="none"/><path d="M11.5,12 h5 M12,14 h4.5" stroke="#1e6a4a" stroke-width="1.3" fill="none"/></svg>
<div style="left:534px;top:544px;width:611px;height:24px;background:#ebebeb"></div>
<div style="left:534px;top:568px;width:611px;height:1px;background:#bcbcbc"></div>
<svg class=ic style="left:535px;top:546px" width="21" height="21" viewBox="0 0 21 21"><path d="M0.5,2.5 Q0.5,0.5 2.5,0.5 H15.5 L20.5,5 V19.6 L19,18.4 L17.6,20.5 L16.2,18.4 L14.6,17 L12.5,16.2 L10.5,16.4 L9,17.4 L7.6,19.2 L6.1,17.8 L4.6,19.3 L3.1,17.8 L1.7,19.2 L0.5,18 Z" fill="#b4d8f4" stroke="#5f98bf" stroke-width="1" stroke-opacity=".75"/><path d="M1,9 H20 V19 L19,18.4 L17.6,20.2 L16.2,18.4 L14.6,17 L12.5,16.2 L10.5,16.4 L9,17.4 L7.6,19 L6.1,17.8 L4.6,19 L3.1,17.8 L1.7,19 L1,18 Z" fill="#8ebfe2" opacity=".75"/><path d="M15.2,5 H20 V19.3 L19,18.4 L17.6,20.2 L16.2,18.4 L15,17.3 Z" fill="#79aed0" opacity=".8"/><path d="M15.5,0.8 V5 H20.2 Z" fill="#79aed0" stroke="#5f98bf" stroke-width=".6"/><text x="2.5" y="14.4" font-family="'Liberation Sans',sans-serif" font-size="9.2" font-weight="700" fill="#06202a" textLength="13.2" lengthAdjust="spacingAndGlyphs">123</text></svg>
<div style="left:534px;top:569px;width:611px;height:24px;background:#fff"></div>
<div style="left:534px;top:593px;width:611px;height:1px;background:#bcbcbc"></div>
<svg class=ic style="left:535px;top:571px" width="21" height="21" viewBox="0 0 21 21"><path d="M0.5,2.5 Q0.5,0.5 2.5,0.5 H15.5 L20.5,5 V19.6 L19,18.4 L17.6,20.5 L16.2,18.4 L14.6,17 L12.5,16.2 L10.5,16.4 L9,17.4 L7.6,19.2 L6.1,17.8 L4.6,19.3 L3.1,17.8 L1.7,19.2 L0.5,18 Z" fill="#b4d8f4" stroke="#5f98bf" stroke-width="1" stroke-opacity=".75"/><path d="M1,9 H20 V19 L19,18.4 L17.6,20.2 L16.2,18.4 L14.6,17 L12.5,16.2 L10.5,16.4 L9,17.4 L7.6,19 L6.1,17.8 L4.6,19 L3.1,17.8 L1.7,19 L1,18 Z" fill="#8ebfe2" opacity=".75"/><path d="M15.2,5 H20 V19.3 L19,18.4 L17.6,20.2 L16.2,18.4 L15,17.3 Z" fill="#79aed0" opacity=".8"/><path d="M15.5,0.8 V5 H20.2 Z" fill="#79aed0" stroke="#5f98bf" stroke-width=".6"/><text x="2.5" y="14.4" font-family="'Liberation Sans',sans-serif" font-size="9.2" font-weight="700" fill="#06202a" textLength="13.2" lengthAdjust="spacingAndGlyphs">123</text></svg>
<div style="left:534px;top:594px;width:611px;height:24px;background:#ebebeb"></div>
<div style="left:534px;top:618px;width:611px;height:1px;background:#bcbcbc"></div>
<svg class=ic style="left:535px;top:596px" width="21" height="21" viewBox="0 0 21 21"><path d="M0.5,2.5 Q0.5,0.5 2.5,0.5 H15.5 L20.5,5 V19.6 L19,18.4 L17.6,20.5 L16.2,18.4 L14.6,17 L12.5,16.2 L10.5,16.4 L9,17.4 L7.6,19.2 L6.1,17.8 L4.6,19.3 L3.1,17.8 L1.7,19.2 L0.5,18 Z" fill="#a8eda8" stroke="#3aa845" stroke-width="1" stroke-opacity=".75"/><path d="M1,9 H20 V19 L19,18.4 L17.6,20.2 L16.2,18.4 L14.6,17 L12.5,16.2 L10.5,16.4 L9,17.4 L7.6,19 L6.1,17.8 L4.6,19 L3.1,17.8 L1.7,19 L1,18 Z" fill="#86e28a" opacity=".75"/><path d="M15.2,5 H20 V19.3 L19,18.4 L17.6,20.2 L16.2,18.4 L15,17.3 Z" fill="#52cc5c" opacity=".8"/><path d="M15.5,0.8 V5 H20.2 Z" fill="#52cc5c" stroke="#3aa845" stroke-width=".6"/><path d="M3,12.5 L10,6.2" stroke="#1e6a4a" stroke-width="1.6" fill="none"/><path d="M11.5,12 h5 M12,14 h4.5" stroke="#1e6a4a" stroke-width="1.3" fill="none"/></svg>
<div style="left:534px;top:619px;width:611px;height:24px;background:#fff"></div>
<div style="left:534px;top:643px;width:611px;height:1px;background:#bcbcbc"></div>
<svg class=ic style="left:535px;top:621px" width="21" height="21" viewBox="0 0 21 21"><path d="M0.5,2.5 Q0.5,0.5 2.5,0.5 H15.5 L20.5,5 V19.6 L19,18.4 L17.6,20.5 L16.2,18.4 L14.6,17 L12.5,16.2 L10.5,16.4 L9,17.4 L7.6,19.2 L6.1,17.8 L4.6,19.3 L3.1,17.8 L1.7,19.2 L0.5,18 Z" fill="#b6ecf6" stroke="#62b4d6" stroke-width="1" stroke-opacity=".75"/><path d="M1,9 H20 V19 L19,18.4 L17.6,20.2 L16.2,18.4 L14.6,17 L12.5,16.2 L10.5,16.4 L9,17.4 L7.6,19 L6.1,17.8 L4.6,19 L3.1,17.8 L1.7,19 L1,18 Z" fill="#8fdcf0" opacity=".75"/><path d="M15.2,5 H20 V19.3 L19,18.4 L17.6,20.2 L16.2,18.4 L15,17.3 Z" fill="#8ccbe6" opacity=".8"/><path d="M15.5,0.8 V5 H20.2 Z" fill="#8ccbe6" stroke="#62b4d6" stroke-width=".6"/><text x="2.4" y="13.1" font-family="'Liberation Sans',sans-serif" font-size="12.5" font-weight="700" fill="#14626c" textLength="11" lengthAdjust="spacingAndGlyphs">½</text></svg>
<div style="left:534px;top:644px;width:611px;height:24px;background:#ebebeb"></div>
<div style="left:534px;top:668px;width:611px;height:1px;background:#bcbcbc"></div>
<svg class=ic style="left:535px;top:646px" width="21" height="21" viewBox="0 0 21 21"><path d="M0.5,2.5 Q0.5,0.5 2.5,0.5 H15.5 L20.5,5 V19.6 L19,18.4 L17.6,20.5 L16.2,18.4 L14.6,17 L12.5,16.2 L10.5,16.4 L9,17.4 L7.6,19.2 L6.1,17.8 L4.6,19.3 L3.1,17.8 L1.7,19.2 L0.5,18 Z" fill="#b4d8f4" stroke="#5f98bf" stroke-width="1" stroke-opacity=".75"/><path d="M1,9 H20 V19 L19,18.4 L17.6,20.2 L16.2,18.4 L14.6,17 L12.5,16.2 L10.5,16.4 L9,17.4 L7.6,19 L6.1,17.8 L4.6,19 L3.1,17.8 L1.7,19 L1,18 Z" fill="#8ebfe2" opacity=".75"/><path d="M15.2,5 H20 V19.3 L19,18.4 L17.6,20.2 L16.2,18.4 L15,17.3 Z" fill="#79aed0" opacity=".8"/><path d="M15.5,0.8 V5 H20.2 Z" fill="#79aed0" stroke="#5f98bf" stroke-width=".6"/><text x="2.5" y="14.4" font-family="'Liberation Sans',sans-serif" font-size="9.2" font-weight="700" fill="#06202a" textLength="13.2" lengthAdjust="spacingAndGlyphs">123</text></svg>
<div style="left:534px;top:669px;width:611px;height:24px;background:#fff"></div>
<div style="left:534px;top:693px;width:611px;height:1px;background:#bcbcbc"></div>
<svg class=ic style="left:535px;top:671px" width="21" height="21" viewBox="0 0 21 21"><path d="M0.5,2.5 Q0.5,0.5 2.5,0.5 H15.5 L20.5,5 V19.6 L19,18.4 L17.6,20.5 L16.2,18.4 L14.6,17 L12.5,16.2 L10.5,16.4 L9,17.4 L7.6,19.2 L6.1,17.8 L4.6,19.3 L3.1,17.8 L1.7,19.2 L0.5,18 Z" fill="#b4d8f4" stroke="#5f98bf" stroke-width="1" stroke-opacity=".75"/><path d="M1,9 H20 V19 L19,18.4 L17.6,20.2 L16.2,18.4 L14.6,17 L12.5,16.2 L10.5,16.4 L9,17.4 L7.6,19 L6.1,17.8 L4.6,19 L3.1,17.8 L1.7,19 L1,18 Z" fill="#8ebfe2" opacity=".75"/><path d="M15.2,5 H20 V19.3 L19,18.4 L17.6,20.2 L16.2,18.4 L15,17.3 Z" fill="#79aed0" opacity=".8"/><path d="M15.5,0.8 V5 H20.2 Z" fill="#79aed0" stroke="#5f98bf" stroke-width=".6"/><text x="2.5" y="14.4" font-family="'Liberation Sans',sans-serif" font-size="9.2" font-weight="700" fill="#06202a" textLength="13.2" lengthAdjust="spacingAndGlyphs">123</text></svg>
<div style="left:838px;top:169px;width:1px;height:525px;background:#b9b9b9"></div>
<div class=btn style="left:1158px;top:629px;width:138px;height:26px"></div>
<div class=btn style="left:1158px;top:669px;width:138px;height:26px"></div>
<div class=btn style="left:1097px;top:715px;width:98px;height:26px"></div>
<div class=btn style="left:1205px;top:715px;width:98px;height:26px"></div>
<div class=btn style="left:989px;top:715px;width:98px;height:26px;border:1.5px solid #0a64c8;border-radius:5px"></div>
<svg class=abs style="left:1303px;top:741px" width="9" height="9" viewBox="0 0 9 9" shape-rendering="crispEdges"><g fill="#b0b0b0"><rect x="0" y="0" width="2" height="2"/><rect x="3" y="0" width="2" height="2"/><rect x="0" y="3" width="2" height="2"/><rect x="3" y="3" width="2" height="2"/><rect x="6" y="3" width="2" height="2"/><rect x="3" y="6" width="2" height="2"/></g></svg>
<div style="left:0;top:819px;width:1920px;height:2px;background:#fbfbfb"></div>
<div style="left:20px;top:825px;width:1894px;height:103px;background:#fff;border:1px solid #a8a8a8;box-sizing:border-box;border-bottom:none"></div>
<div style="left:21px;top:852px;width:1892px;height:1px;background:#dadada"></div>
<div style="left:220px;top:826px;width:1px;height:26px;background:#dadada"></div>
<div style="left:21px;top:853px;width:1892px;height:23px;background:#ebebeb"></div>
<div style="left:21px;top:876px;width:1892px;height:1px;background:#cdcdcd"></div>
<div style="left:219px;top:853px;width:1px;height:23px;background:#cfcfcf"></div>
<svg class=abs style="left:27px;top:858px" width="11" height="11" viewBox="0 0 11 11"><circle cx="5.5" cy="5.5" r="4.2" fill="#cfcbc8" stroke="#858b93" stroke-width="1.3"/><path d="M3.6,6.8 L6.6,3.8" stroke="#f2f2f2" stroke-width="1.1"/></svg>
<div style="left:21px;top:877px;width:1892px;height:24px;background:#fff"></div>
<div style="left:21px;top:901px;width:1892px;height:1px;background:#cdcdcd"></div>
<div style="left:219px;top:877px;width:1px;height:24px;background:#cfcfcf"></div>
<svg class=abs style="left:27px;top:883px" width="11" height="11" viewBox="0 0 11 11"><circle cx="5.5" cy="5.5" r="4.2" fill="#cfcbc8" stroke="#858b93" stroke-width="1.3"/><path d="M3.6,6.8 L6.6,3.8" stroke="#f2f2f2" stroke-width="1.1"/></svg>
<div style="left:21px;top:902px;width:1892px;height:24px;background:#ebebeb"></div>
<div style="left:21px;top:926px;width:1892px;height:1px;background:#cdcdcd"></div>
<div style="left:219px;top:902px;width:1px;height:24px;background:#cfcfcf"></div>
<svg class=abs style="left:27px;top:908px" width="11" height="11" viewBox="0 0 11 11"><circle cx="5.5" cy="5.5" r="4.2" fill="#cfcbc8" stroke="#858b93" stroke-width="1.3"/><path d="M3.6,6.8 L6.6,3.8" stroke="#f2f2f2" stroke-width="1.1"/></svg>
<div style="left:21px;top:927px;width:1892px;height:3px;background:#fff"></div>
<div style="left:21px;top:930px;width:1892px;height:1px;background:#000"></div>
<div style="left:20px;top:930px;width:1px;height:27px;background:#a0a0a0"></div>
<div style="left:0;top:957px;width:1920px;height:5px;background:#fbfbfb"></div>
<div style="left:778px;top:930px;width:73px;height:25px;background:#fff;border:1px solid #000;border-top-color:#fff;box-sizing:border-box"></div>
<div style="left:86px;top:934px;width:1px;height:19px;background:#747474"></div>
<div style="left:171px;top:934px;width:1px;height:19px;background:#747474"></div>
<div style="left:301px;top:934px;width:1px;height:19px;background:#747474"></div>
<div style="left:362px;top:934px;width:1px;height:19px;background:#747474"></div>
<div style="left:425px;top:934px;width:1px;height:19px;background:#747474"></div>
<div style="left:514px;top:934px;width:1px;height:19px;background:#747474"></div>
<div style="left:609px;top:934px;width:1px;height:19px;background:#747474"></div>
<div style="left:683px;top:934px;width:1px;height:19px;background:#747474"></div>
<div style="left:923px;top:934px;width:1px;height:19px;background:#747474"></div>
<div style="left:3px;top:843px;width:16px;height:115px;background:linear-gradient(#d4e6ee,#bfd3e3)"></div>
<div class=t style="left:3px;top:955.5px;width:60px;height:16px;transform-origin:0 0;transform:rotate(-90deg);font-size:14.5px;line-height:16px;letter-spacing:-.35px;color:#111">Terminal</div>
<svg class=abs style="left:5px;top:827px" width="10" height="10" viewBox="0 0 10 10"><path d="M1.2,1.4 L8.8,8.4 M8.8,1.4 L1.2,8.4" stroke="#111" stroke-width="1.6" fill="none"/></svg>
<div style="left:0;top:962px;width:1920px;height:1px;background:#a8a8a8"></div>
<div style="left:1024px;top:967px;width:1px;height:21px;background:#a8a8a8"></div><div style="left:1025px;top:967px;width:1px;height:21px;background:#fdfdfd"></div>
<div style="left:1173px;top:967px;width:1px;height:21px;background:#a8a8a8"></div><div style="left:1174px;top:967px;width:1px;height:21px;background:#fdfdfd"></div>
<div style="left:1304px;top:967px;width:1px;height:21px;background:#a8a8a8"></div><div style="left:1305px;top:967px;width:1px;height:21px;background:#fdfdfd"></div>
<div style="left:1393px;top:967px;width:1px;height:21px;background:#a8a8a8"></div><div style="left:1394px;top:967px;width:1px;height:21px;background:#fdfdfd"></div>
<div style="left:1482px;top:967px;width:1px;height:21px;background:#a8a8a8"></div><div style="left:1483px;top:967px;width:1px;height:21px;background:#fdfdfd"></div>
<div style="left:1567px;top:967px;width:1px;height:21px;background:#a8a8a8"></div><div style="left:1568px;top:967px;width:1px;height:21px;background:#fdfdfd"></div>
<div style="left:1654px;top:967px;width:1px;height:21px;background:#a8a8a8"></div><div style="left:1655px;top:967px;width:1px;height:21px;background:#fdfdfd"></div>
<div style="left:1738px;top:967px;width:1px;height:21px;background:#a8a8a8"></div><div style="left:1739px;top:967px;width:1px;height:21px;background:#fdfdfd"></div>
<svg class=abs style="left:1744px;top:970px" width="32" height="16" viewBox="0 0 32 16" shape-rendering="crispEdges"><rect x="0" y="0" width="3" height="11" fill="#6c6c63"/><rect x="0" y="12" width="3" height="4" fill="#0c3c4c"/><rect x="4" y="0" width="3" height="10" fill="#6c6c63"/><rect x="4" y="11" width="3" height="5" fill="#0c3c4c"/><rect x="8" y="0" width="3" height="9" fill="#6c6c63"/><rect x="8" y="10" width="3" height="6" fill="#0c3c4c"/><rect x="12" y="0" width="3" height="8" fill="#6c6c63"/><rect x="12" y="9" width="3" height="7" fill="#0c3c4c"/><rect x="16" y="0" width="3" height="6" fill="#6c6c63"/><rect x="16" y="7" width="3" height="9" fill="#0c3c4c"/><rect x="20" y="0" width="3" height="5" fill="#6c6c63"/><rect x="20" y="6" width="3" height="10" fill="#0c3c4c"/><rect x="24" y="0" width="3" height="4" fill="#6c6c63"/><rect x="24" y="5" width="3" height="11" fill="#0c3c4c"/><rect x="28" y="0" width="3" height="3" fill="#6c6c63"/><rect x="28" y="4" width="3" height="12" fill="#0c3c4c"/></svg>
<span class=t style="left:33.10px;top:6.30px;font-size:15px;line-height:15px;color:#6d6d6d;font-family:'Liberation Sans',sans-serif;font-weight:400;letter-spacing:0.067px">File</span>
<span class=t style="left:78.50px;top:6.30px;font-size:15px;line-height:15px;color:#6d6d6d;font-family:'Liberation Sans',sans-serif;font-weight:400;letter-spacing:-0.500px">View</span>
<span class=t style="left:130.50px;top:6.30px;font-size:15px;line-height:15px;color:#6d6d6d;font-family:'Liberation Sans',sans-serif;font-weight:400;letter-spacing:-0.220px">Insert</span>
<span class=t style="left:187.20px;top:6.30px;font-size:15px;line-height:15px;color:#6d6d6d;font-family:'Liberation Sans',sans-serif;font-weight:400;letter-spacing:-0.360px">Charts</span>
<span class=t style="left:250.50px;top:6.30px;font-size:15px;line-height:15px;color:#6d6d6d;font-family:'Liberation Sans',sans-serif;font-weight:400;letter-spacing:-0.125px">Tools</span>
<span class=t style="left:306.20px;top:6.30px;font-size:15px;line-height:15px;color:#6d6d6d;font-family:'Liberation Sans',sans-serif;font-weight:400;letter-spacing:0.160px">Window</span>
<span class=t style="left:381.20px;top:6.30px;font-size:15px;line-height:15px;color:#6d6d6d;font-family:'Liberation Sans',sans-serif;font-weight:400;letter-spacing:0.400px">Help</span>
<span class=t style="left:8.50px;top:34.93px;font-size:12.6px;line-height:12.6px;color:#fff;font-family:'Liberation Sans',sans-serif;font-weight:400;letter-spacing:-0.722px">XAUUSD,M15</span>
<span class=t style="left:89.90px;top:34.93px;font-size:12.6px;line-height:12.6px;color:#fff;font-family:'Liberation Sans',sans-serif;font-weight:400;letter-spacing:0.117px">3999.82</span>
<span class=t style="left:139.60px;top:34.93px;font-size:12.6px;line-height:12.6px;color:#fff;font-family:'Liberation Sans',sans-serif;font-weight:400;letter-spacing:0.133px">4001.97</span>
<span class=t style="left:189.60px;top:34.93px;font-size:12.6px;line-height:12.6px;color:#fff;font-family:'Liberation Sans',sans-serif;font-weight:400;letter-spacing:0.167px">3998.32</span>
<span class=t style="left:239.30px;top:34.93px;font-size:12.6px;line-height:12.6px;color:#fff;font-family:'Liberation Sans',sans-serif;font-weight:400;letter-spacing:0.183px">4000.43</span>
<span class=t style="left:1717.50px;top:35.93px;font-size:12.6px;line-height:12.6px;color:#fff;font-family:'Liberation Sans',sans-serif;font-weight:400;letter-spacing:-0.294px">Mon Scalper MT4_fix</span>
<span class=t style="left:1861.10px;top:35.93px;font-size:12.6px;line-height:12.6px;color:#fff;font-family:'Liberation Sans',sans-serif;font-weight:400;letter-spacing:0.150px">4029.55</span>
<span class=t style="left:1861.10px;top:84.93px;font-size:12.6px;line-height:12.6px;color:#fff;font-family:'Liberation Sans',sans-serif;font-weight:400;letter-spacing:0.150px">4025.20</span>
<span class=t style="left:1861.10px;top:133.93px;font-size:12.6px;line-height:12.6px;color:#fff;font-family:'Liberation Sans',sans-serif;font-weight:400;letter-spacing:0.150px">4020.85</span>
<span class=t style="left:1861.10px;top:182.93px;font-size:12.6px;line-height:12.6px;color:#fff;font-family:'Liberation Sans',sans-serif;font-weight:400;letter-spacing:0.150px">4016.50</span>
<span class=t style="left:1861.10px;top:231.93px;font-size:12.6px;line-height:12.6px;color:#fff;font-family:'Liberation Sans',sans-serif;font-weight:400;letter-spacing:0.150px">4012.15</span>
<span class=t style="left:1861.10px;top:280.93px;font-size:12.6px;line-height:12.6px;color:#fff;font-family:'Liberation Sans',sans-serif;font-weight:400;letter-spacing:0.150px">4007.80</span>
<span class=t style="left:1861.10px;top:329.93px;font-size:12.6px;line-height:12.6px;color:#fff;font-family:'Liberation Sans',sans-serif;font-weight:400;letter-spacing:0.150px">4003.45</span>
<span class=t style="left:1861.10px;top:378.93px;font-size:12.6px;line-height:12.6px;color:#fff;font-family:'Liberation Sans',sans-serif;font-weight:400;letter-spacing:0.150px">3999.10</span>
<span class=t style="left:1861.10px;top:427.93px;font-size:12.6px;line-height:12.6px;color:#fff;font-family:'Liberation Sans',sans-serif;font-weight:400;letter-spacing:0.150px">3994.75</span>
<span class=t style="left:1861.10px;top:476.93px;font-size:12.6px;line-height:12.6px;color:#fff;font-family:'Liberation Sans',sans-serif;font-weight:400;letter-spacing:0.150px">3990.40</span>
<span class=t style="left:1861.10px;top:525.93px;font-size:12.6px;line-height:12.6px;color:#fff;font-family:'Liberation Sans',sans-serif;font-weight:400;letter-spacing:0.150px">3986.05</span>
<span class=t style="left:1861.10px;top:574.93px;font-size:12.6px;line-height:12.6px;color:#fff;font-family:'Liberation Sans',sans-serif;font-weight:400;letter-spacing:0.150px">3981.70</span>
<span class=t style="left:1861.10px;top:623.93px;font-size:12.6px;line-height:12.6px;color:#fff;font-family:'Liberation Sans',sans-serif;font-weight:400;letter-spacing:0.150px">3977.35</span>
<span class=t style="left:1861.10px;top:672.93px;font-size:12.6px;line-height:12.6px;color:#fff;font-family:'Liberation Sans',sans-serif;font-weight:400;letter-spacing:0.150px">3973.00</span>
<span class=t style="left:1861.10px;top:721.93px;font-size:12.6px;line-height:12.6px;color:#fff;font-family:'Liberation Sans',sans-serif;font-weight:400;letter-spacing:0.150px">3968.65</span>
<span class=t style="left:1861.10px;top:770.93px;font-size:12.6px;line-height:12.6px;color:#fff;font-family:'Liberation Sans',sans-serif;font-weight:400;letter-spacing:0.150px">3964.30</span>
<span class=t style="left:1861.10px;top:364.33px;font-size:12.6px;line-height:12.6px;color:#000;font-family:'Liberation Sans',sans-serif;font-weight:400;letter-spacing:0.150px">4000.43</span>
<span class=t style="left:4.20px;top:801.13px;font-size:12.6px;line-height:12.6px;color:#fff;font-family:'Liberation Sans',sans-serif;font-weight:400;letter-spacing:-0.011px">5 Nov 2025</span>
<span class=t style="left:100.20px;top:801.13px;font-size:12.6px;line-height:12.6px;color:#fff;font-family:'Liberation Sans',sans-serif;font-weight:400;letter-spacing:0.010px">6 Nov 02:00</span>
<span class=t style="left:196.20px;top:801.13px;font-size:12.6px;line-height:12.6px;color:#fff;font-family:'Liberation Sans',sans-serif;font-weight:400;letter-spacing:0.010px">6 Nov 05:00</span>
<span class=t style="left:292.20px;top:801.13px;font-size:12.6px;line-height:12.6px;color:#fff;font-family:'Liberation Sans',sans-serif;font-weight:400;letter-spacing:0.010px">6 Nov 08:00</span>
<span class=t style="left:388.20px;top:801.13px;font-size:12.6px;line-height:12.6px;color:#fff;font-family:'Liberation Sans',sans-serif;font-weight:400;letter-spacing:0.110px">6 Nov 11:00</span>
<span class=t style="left:484.20px;top:801.13px;font-size:12.6px;line-height:12.6px;color:#fff;font-family:'Liberation Sans',sans-serif;font-weight:400;letter-spacing:0.010px">6 Nov 14:00</span>
<span class=t style="left:580.20px;top:801.13px;font-size:12.6px;line-height:12.6px;color:#fff;font-family:'Liberation Sans',sans-serif;font-weight:400;letter-spacing:0.010px">6 Nov 17:00</span>
<span class=t style="left:676.20px;top:801.13px;font-size:12.6px;line-height:12.6px;color:#fff;font-family:'Liberation Sans',sans-serif;font-weight:400;letter-spacing:0.010px">6 Nov 20:00</span>
<span class=t style="left:772.20px;top:801.13px;font-size:12.6px;line-height:12.6px;color:#fff;font-family:'Liberation Sans',sans-serif;font-weight:400;letter-spacing:0.010px">7 Nov 00:00</span>
<span class=t style="left:868.20px;top:801.13px;font-size:12.6px;line-height:12.6px;color:#fff;font-family:'Liberation Sans',sans-serif;font-weight:400;letter-spacing:0.010px">7 Nov 03:00</span>
<span class=t style="left:964.20px;top:801.13px;font-size:12.6px;line-height:12.6px;color:#fff;font-family:'Liberation Sans',sans-serif;font-weight:400;letter-spacing:0.010px">7 Nov 06:00</span>
<span class=t style="left:1060.20px;top:801.13px;font-size:12.6px;line-height:12.6px;color:#fff;font-family:'Liberation Sans',sans-serif;font-weight:400;letter-spacing:0.010px">7 Nov 09:00</span>
<span class=t style="left:1156.20px;top:801.13px;font-size:12.6px;line-height:12.6px;color:#fff;font-family:'Liberation Sans',sans-serif;font-weight:400;letter-spacing:0.010px">7 Nov 12:00</span>
<span class=t style="left:1252.20px;top:801.13px;font-size:12.6px;line-height:12.6px;color:#fff;font-family:'Liberation Sans',sans-serif;font-weight:400;letter-spacing:0.010px">7 Nov 15:00</span>
<span class=t style="left:1348.20px;top:801.13px;font-size:12.6px;line-height:12.6px;color:#fff;font-family:'Liberation Sans',sans-serif;font-weight:400;letter-spacing:0.010px">7 Nov 18:00</span>
<span class=t style="left:1444.20px;top:801.13px;font-size:12.6px;line-height:12.6px;color:#fff;font-family:'Liberation Sans',sans-serif;font-weight:400;letter-spacing:0.010px">7 Nov 21:00</span>
<span class=t style="left:520.90px;top:76.30px;font-size:15px;line-height:15px;color:#000;font-family:'Liberation Sans',sans-serif;font-weight:400;letter-spacing:-0.156px">Expert - Mon Scalper MT4_fix</span>
<span class=t style="left:527.70px;top:116.57px;font-size:13.5px;line-height:13.5px;color:#000;font-family:'Liberation Sans',sans-serif;font-weight:400;letter-spacing:0.425px">About</span>
<span class=t style="left:576.10px;top:116.57px;font-size:13.5px;line-height:13.5px;color:#000;font-family:'Liberation Sans',sans-serif;font-weight:400;letter-spacing:0.100px">Common</span>
<span class=t style="left:641.10px;top:114.67px;font-size:13.5px;line-height:13.5px;color:#000;font-family:'Liberation Sans',sans-serif;font-weight:400;letter-spacing:-0.180px">Inputs</span>
<span class=t style="left:540.00px;top:150.57px;font-size:13.5px;line-height:13.5px;color:#000;font-family:'Liberation Sans',sans-serif;font-weight:400;letter-spacing:0.457px">Variable</span>
<span class=t style="left:845.00px;top:150.57px;font-size:13.5px;line-height:13.5px;color:#000;font-family:'Liberation Sans',sans-serif;font-weight:400;letter-spacing:0.600px">Value</span>
<span class=t style="left:561.80px;top:174.70px;font-size:13.7px;line-height:13.7px;color:#111;font-family:'Liberation Sans',sans-serif;font-weight:400;letter-spacing:-0.740px">__om__</span>
<span class=t style="left:881.90px;top:174.70px;font-size:13.7px;line-height:13.7px;color:#111;font-family:'Liberation Sans',sans-serif;font-weight:400;letter-spacing:-0.144px">[ Order Manager ]</span>
<span class=t style="left:560.80px;top:199.70px;font-size:13.7px;line-height:13.7px;color:#111;font-family:'Liberation Sans',sans-serif;font-weight:400;letter-spacing:-0.040px">Stop loss method</span>
<span class=t style="left:843.50px;top:199.70px;font-size:13.7px;line-height:13.7px;color:#111;font-family:'Liberation Sans',sans-serif;font-weight:400;letter-spacing:-0.533px">Auto</span>
<span class=t style="left:562.50px;top:224.70px;font-size:13.7px;line-height:13.7px;color:#111;font-family:'Liberation Sans',sans-serif;font-weight:400;letter-spacing:-0.107px">Trailing method</span>
<span class=t style="left:843.50px;top:224.70px;font-size:13.7px;line-height:13.7px;color:#111;font-family:'Liberation Sans',sans-serif;font-weight:400;letter-spacing:-0.533px">Auto</span>
<span class=t style="left:560.80px;top:249.70px;font-size:13.7px;line-height:13.7px;color:#111;font-family:'Liberation Sans',sans-serif;font-weight:400;letter-spacing:0.013px">Stop loss</span>
<span class=t style="left:843.10px;top:249.70px;font-size:13.7px;line-height:13.7px;color:#111;font-family:'Liberation Sans',sans-serif;font-weight:400;letter-spacing:-0.633px">1500</span>
<span class=t style="left:562.50px;top:274.70px;font-size:13.7px;line-height:13.7px;color:#111;font-family:'Liberation Sans',sans-serif;font-weight:400;letter-spacing:-0.200px">Trailing start</span>
<span class=t style="left:843.10px;top:274.70px;font-size:13.7px;line-height:13.7px;color:#111;font-family:'Liberation Sans',sans-serif;font-weight:400;letter-spacing:-0.850px">300</span>
<span class=t style="left:562.50px;top:299.70px;font-size:13.7px;line-height:13.7px;color:#111;font-family:'Liberation Sans',sans-serif;font-weight:400;letter-spacing:-0.071px">Trailing</span>
<span class=t style="left:843.10px;top:299.70px;font-size:13.7px;line-height:13.7px;color:#111;font-family:'Liberation Sans',sans-serif;font-weight:400;letter-spacing:-0.700px">50</span>
<span class=t style="left:562.50px;top:324.70px;font-size:13.7px;line-height:13.7px;color:#111;font-family:'Liberation Sans',sans-serif;font-weight:400;letter-spacing:-0.133px">Trailing step</span>
<span class=t style="left:843.10px;top:324.70px;font-size:13.7px;line-height:13.7px;color:#111;font-family:'Liberation Sans',sans-serif;font-weight:400;letter-spacing:-0.700px">10</span>
<span class=t style="left:561.80px;top:349.70px;font-size:13.7px;line-height:13.7px;color:#111;font-family:'Liberation Sans',sans-serif;font-weight:400;letter-spacing:-0.880px">__mm__</span>
<span class=t style="left:881.90px;top:349.70px;font-size:13.7px;line-height:13.7px;color:#111;font-family:'Liberation Sans',sans-serif;font-weight:400;letter-spacing:0.006px">[Risk Management]</span>
<span class=t style="left:560.80px;top:374.70px;font-size:13.7px;line-height:13.7px;color:#111;font-family:'Liberation Sans',sans-serif;font-weight:400;letter-spacing:-0.084px">Selected money management method</span>
<span class=t style="left:843.10px;top:374.70px;font-size:13.7px;line-height:13.7px;color:#111;font-family:'Liberation Sans',sans-serif;font-weight:400;letter-spacing:-0.164px">Use a fixed trading volume</span>
<span class=t style="left:561.80px;top:399.70px;font-size:13.7px;line-height:13.7px;color:#111;font-family:'Liberation Sans',sans-serif;font-weight:400;letter-spacing:-0.278px">Volume for each trade (used if FIXED_VOL)</span>
<span class=t style="left:844.10px;top:399.70px;font-size:13.7px;line-height:13.7px;color:#111;font-family:'Liberation Sans',sans-serif;font-weight:400;letter-spacing:-1.067px">0.01</span>
<span class=t style="left:560.80px;top:424.70px;font-size:13.7px;line-height:13.7px;color:#111;font-family:'Liberation Sans',sans-serif;font-weight:400;letter-spacing:-0.191px">Risk percentage of balance (used if FIXED_...</span>
<span class=t style="left:843.10px;top:424.70px;font-size:13.7px;line-height:13.7px;color:#111;font-family:'Liberation Sans',sans-serif;font-weight:400;letter-spacing:-0.700px">3.0</span>
<span class=t style="left:561.80px;top:449.70px;font-size:13.7px;line-height:13.7px;color:#111;font-family:'Liberation Sans',sans-serif;font-weight:400;letter-spacing:-0.356px">__params__</span>
<span class=t style="left:881.90px;top:449.70px;font-size:13.7px;line-height:13.7px;color:#111;font-family:'Liberation Sans',sans-serif;font-weight:400;letter-spacing:-0.100px">[ Params ]</span>
<span class=t style="left:561.80px;top:474.70px;font-size:13.7px;line-height:13.7px;color:#111;font-family:'Liberation Sans',sans-serif;font-weight:400;letter-spacing:-0.200px">Order comment</span>
<span class=t style="left:843.10px;top:474.70px;font-size:13.7px;line-height:13.7px;color:#111;font-family:'Liberation Sans',sans-serif;font-weight:400;letter-spacing:-0.040px">Mon Scalper</span>
<span class=t style="left:560.80px;top:499.70px;font-size:13.7px;line-height:13.7px;color:#111;font-family:'Liberation Sans',sans-serif;font-weight:400;letter-spacing:-0.155px">Magic number</span>
<span class=t style="left:843.10px;top:499.70px;font-size:13.7px;line-height:13.7px;color:#111;font-family:'Liberation Sans',sans-serif;font-weight:400;letter-spacing:-0.820px">121224</span>
<span class=t style="left:561.80px;top:524.70px;font-size:13.7px;line-height:13.7px;color:#111;font-family:'Liberation Sans',sans-serif;font-weight:400;letter-spacing:-0.148px">Close all trades on Friday</span>
<span class=t style="left:843.50px;top:524.70px;font-size:13.7px;line-height:13.7px;color:#111;font-family:'Liberation Sans',sans-serif;font-weight:400;letter-spacing:-0.150px">false</span>
<span class=t style="left:560.80px;top:549.70px;font-size:13.7px;line-height:13.7px;color:#111;font-family:'Liberation Sans',sans-serif;font-weight:400;letter-spacing:-0.179px">Hour to close trades on Friday (server time)</span>
<span class=t style="left:843.10px;top:549.70px;font-size:13.7px;line-height:13.7px;color:#111;font-family:'Liberation Sans',sans-serif;font-weight:400;letter-spacing:-0.700px">15</span>
<span class=t style="left:560.80px;top:574.70px;font-size:13.7px;line-height:13.7px;color:#111;font-family:'Liberation Sans',sans-serif;font-weight:400;letter-spacing:-0.174px">Number of bars to expire</span>
<span class=t style="left:843.10px;top:574.70px;font-size:13.7px;line-height:13.7px;color:#111;font-family:'Liberation Sans',sans-serif;font-weight:400;letter-spacing:-0.850px">120</span>
<span class=t style="left:560.80px;top:599.70px;font-size:13.7px;line-height:13.7px;color:#111;font-family:'Liberation Sans',sans-serif;font-weight:400;letter-spacing:-0.150px">Filter orders at support/resistance</span>
<span class=t style="left:843.50px;top:599.70px;font-size:13.7px;line-height:13.7px;color:#111;font-family:'Liberation Sans',sans-serif;font-weight:400;letter-spacing:-0.500px">true</span>
<span class=t style="left:561.80px;top:624.70px;font-size:13.7px;line-height:13.7px;color:#111;font-family:'Liberation Sans',sans-serif;font-weight:400;letter-spacing:-0.347px">Volume multiplier (1.0 = disabled, &gt;1.0 = auto ...</span>
<span class=t style="left:843.10px;top:624.70px;font-size:13.7px;line-height:13.7px;color:#111;font-family:'Liberation Sans',sans-serif;font-weight:400;letter-spacing:-0.850px">1.0</span>
<span class=t style="left:560.80px;top:649.70px;font-size:13.7px;line-height:13.7px;color:#111;font-family:'Liberation Sans',sans-serif;font-weight:400;letter-spacing:-0.221px">Period for the long trendline</span>
<span class=t style="left:844.10px;top:649.70px;font-size:13.7px;line-height:13.7px;color:#111;font-family:'Liberation Sans',sans-serif;font-weight:400;letter-spacing:0.000px">6</span>
<span class=t style="left:560.80px;top:674.70px;font-size:13.7px;line-height:13.7px;color:#111;font-family:'Liberation Sans',sans-serif;font-weight:400;letter-spacing:-0.252px">Period for the short trendline</span>
<span class=t style="left:843.10px;top:674.70px;font-size:13.7px;line-height:13.7px;color:#111;font-family:'Liberation Sans',sans-serif;font-weight:400;letter-spacing:0.000px">3</span>
<span class=t style="left:1211.68px;top:635.57px;font-size:13.5px;line-height:13.5px;color:#000;font-family:'Liberation Sans',sans-serif;font-weight:400;letter-spacing:-0.300px">Load</span>
<span class=t style="left:1211.31px;top:675.57px;font-size:13.5px;line-height:13.5px;color:#000;font-family:'Liberation Sans',sans-serif;font-weight:400;letter-spacing:-0.300px">Save</span>
<span class=t style="left:1028.04px;top:721.57px;font-size:13.5px;line-height:13.5px;color:#000;font-family:'Liberation Sans',sans-serif;font-weight:400;letter-spacing:-0.300px">OK</span>
<span class=t style="left:1124.98px;top:721.57px;font-size:13.5px;line-height:13.5px;color:#000;font-family:'Liberation Sans',sans-serif;font-weight:400;letter-spacing:-0.300px">Cancel</span>
<span class=t style="left:1236.36px;top:721.57px;font-size:13.5px;line-height:13.5px;color:#000;font-family:'Liberation Sans',sans-serif;font-weight:400;letter-spacing:-0.300px">Reset</span>
<span class=t style="left:27.50px;top:832.20px;font-size:15px;line-height:15px;color:#000;font-family:'Liberation Sans',sans-serif;font-weight:400;letter-spacing:-0.033px">Time</span>
<span class=t style="left:225.90px;top:832.20px;font-size:15px;line-height:15px;color:#000;font-family:'Liberation Sans',sans-serif;font-weight:400;letter-spacing:-0.200px">Message</span>
<span class=t style="left:48.30px;top:856.60px;font-size:15px;line-height:15px;color:#000;font-family:'Liberation Sans',sans-serif;font-weight:400;letter-spacing:-0.445px">2025.11.09 05:15:50.286</span>
<span class=t style="left:48.30px;top:881.60px;font-size:15px;line-height:15px;color:#000;font-family:'Liberation Sans',sans-serif;font-weight:400;letter-spacing:-0.491px">2025.11.09 05:15:50.224</span>
<span class=t style="left:48.30px;top:906.60px;font-size:15px;line-height:15px;color:#000;font-family:'Liberation Sans',sans-serif;font-weight:400;letter-spacing:-0.445px">2025.11.09 05:15:40.943</span>
<span class=t style="left:225.20px;top:856.60px;font-size:15px;line-height:15px;color:#000;font-family:'Liberation Sans',sans-serif;font-weight:400;letter-spacing:-0.148px">Mon Scalper MT4_fix XAUUSD,M15: initialized</span>
<span class=t style="left:225.20px;top:881.60px;font-size:15px;line-height:15px;color:#000;font-family:'Liberation Sans',sans-serif;font-weight:400;letter-spacing:-0.382px">Mon Scalper MT4_fix XAUUSD,M15 inputs: __om__=</span>
<span class=t style="left:617.30px;top:881.60px;font-size:15px;line-height:15px;color:#000;font-family:'Liberation Sans',sans-serif;font-weight:400;letter-spacing:0.025px">[ Order Manager ]</span>
<span class=t style="left:787.40px;top:881.60px;font-size:15px;line-height:15px;color:#000;font-family:'Liberation Sans',sans-serif;font-weight:400;letter-spacing:-0.186px">; inp_stop_loss_method=1; inp_order_mng_type=1; inp_stop_loss_pip=1500; inp_trailing_start=300; inp_trailing_pip=50; inp_trailing_step_pip=10; __mm__=</span>
<span class=t style="left:1854.60px;top:881.60px;font-size:15px;line-height:15px;color:#000;font-family:'Liberation Sans',sans-serif;font-weight:400;letter-spacing:-0.650px">[Risk ...</span>
<span class=t style="left:225.20px;top:906.60px;font-size:15px;line-height:15px;color:#000;font-family:'Liberation Sans',sans-serif;font-weight:400;letter-spacing:-0.267px">Expert Mon Scalper MT4_fix XAUUSD,M15: loaded successfully</span>
<span class=t style="left:36.30px;top:934.60px;font-size:15px;line-height:15px;color:#858585;font-family:'Liberation Sans',sans-serif;font-weight:400;letter-spacing:-0.225px">Trade</span>
<span class=t style="left:97.80px;top:934.60px;font-size:15px;line-height:15px;color:#858585;font-family:'Liberation Sans',sans-serif;font-weight:400;letter-spacing:-0.200px">Exposure</span>
<span class=t style="left:183.70px;top:934.60px;font-size:15px;line-height:15px;color:#858585;font-family:'Liberation Sans',sans-serif;font-weight:400;letter-spacing:0.050px">Account History</span>
<span class=t style="left:312.70px;top:934.60px;font-size:15px;line-height:15px;color:#858585;font-family:'Liberation Sans',sans-serif;font-weight:400;letter-spacing:0.333px">News</span>
<span class=t style="left:374.70px;top:934.60px;font-size:15px;line-height:15px;color:#858585;font-family:'Liberation Sans',sans-serif;font-weight:400;letter-spacing:0.140px">Alerts</span>
<span class=t style="left:436.70px;top:934.60px;font-size:15px;line-height:15px;color:#858585;font-family:'Liberation Sans',sans-serif;font-weight:400;letter-spacing:0.667px">Mailbox</span>
<span class=t style="left:525.70px;top:934.60px;font-size:15px;line-height:15px;color:#858585;font-family:'Liberation Sans',sans-serif;font-weight:400;letter-spacing:0.340px">Market</span>
<span class=t style="left:621.70px;top:934.60px;font-size:15px;line-height:15px;color:#858585;font-family:'Liberation Sans',sans-serif;font-weight:400;letter-spacing:0.100px">Articles</span>
<span class=t style="left:694.70px;top:934.60px;font-size:15px;line-height:15px;color:#858585;font-family:'Liberation Sans',sans-serif;font-weight:400;letter-spacing:-0.288px">Code Base</span>
<span class=t style="left:863.50px;top:934.60px;font-size:15px;line-height:15px;color:#858585;font-family:'Liberation Sans',sans-serif;font-weight:400;letter-spacing:-0.133px">Journal</span>
<span class=t style="left:790.90px;top:934.60px;font-size:15px;line-height:15px;color:#000;font-family:'Liberation Sans',sans-serif;font-weight:400;letter-spacing:-0.367px">Experts</span>
<span class=t style="left:495.50px;top:941.49px;font-size:11px;line-height:11px;color:#a0522d;font-family:'Liberation Sans',sans-serif;font-weight:700;letter-spacing:0.000px">7</span>
<span class=t style="left:577.30px;top:941.49px;font-size:11px;line-height:11px;color:#a0522d;font-family:'Liberation Sans',sans-serif;font-weight:700;letter-spacing:0.850px">135</span>
<span class=t style="left:1.10px;top:971.70px;font-size:15px;line-height:15px;color:#000;font-family:'Liberation Sans',sans-serif;font-weight:400;letter-spacing:-0.376px">For Help, press F1</span>
<span class=t style="left:1028.70px;top:971.70px;font-size:15px;line-height:15px;color:#000;font-family:'Liberation Sans',sans-serif;font-weight:400;letter-spacing:0.450px">Default</span>
<span class=t style="left:1178.70px;top:971.70px;font-size:15px;line-height:15px;color:#000;font-family:'Liberation Sans',sans-serif;font-weight:400;letter-spacing:-0.353px">2025.11.06 18:30</span>
<span class=t style="left:1309.70px;top:971.70px;font-size:15px;line-height:15px;color:#000;font-family:'Liberation Sans',sans-serif;font-weight:400;letter-spacing:-0.444px">O: 3982.86</span>
<span class=t style="left:1398.10px;top:971.70px;font-size:15px;line-height:15px;color:#000;font-family:'Liberation Sans',sans-serif;font-weight:400;letter-spacing:-0.344px">H: 3991.01</span>
<span class=t style="left:1486.70px;top:971.70px;font-size:15px;line-height:15px;color:#000;font-family:'Liberation Sans',sans-serif;font-weight:400;letter-spacing:-0.478px">L: 3982.77</span>
<span class=t style="left:1571.70px;top:971.70px;font-size:15px;line-height:15px;color:#000;font-family:'Liberation Sans',sans-serif;font-weight:400;letter-spacing:-0.522px">C: 3989.07</span>
<span class=t style="left:1659.70px;top:971.70px;font-size:15px;line-height:15px;color:#000;font-family:'Liberation Sans',sans-serif;font-weight:400;letter-spacing:-0.383px">V: 1576</span>
<span class=t style="left:1778.70px;top:971.70px;font-size:15px;line-height:15px;color:#000;font-family:'Liberation Sans',sans-serif;font-weight:400;letter-spacing:0.550px">11/1 kb</span>
<span class=t style="left:1562.50px;top:487.22px;font-size:34px;line-height:34px;color:#fff;font-family:'Liberation Serif',serif;font-weight:700;letter-spacing:0.000px;transform-origin:0 0;transform:scaleX(0.9270)">Live Signal</span>
<span class=t style="left:1223.5px;top:74.5px;font-size:15px;line-height:20px;color:#1a1a1a">?</span>
</body></html>
